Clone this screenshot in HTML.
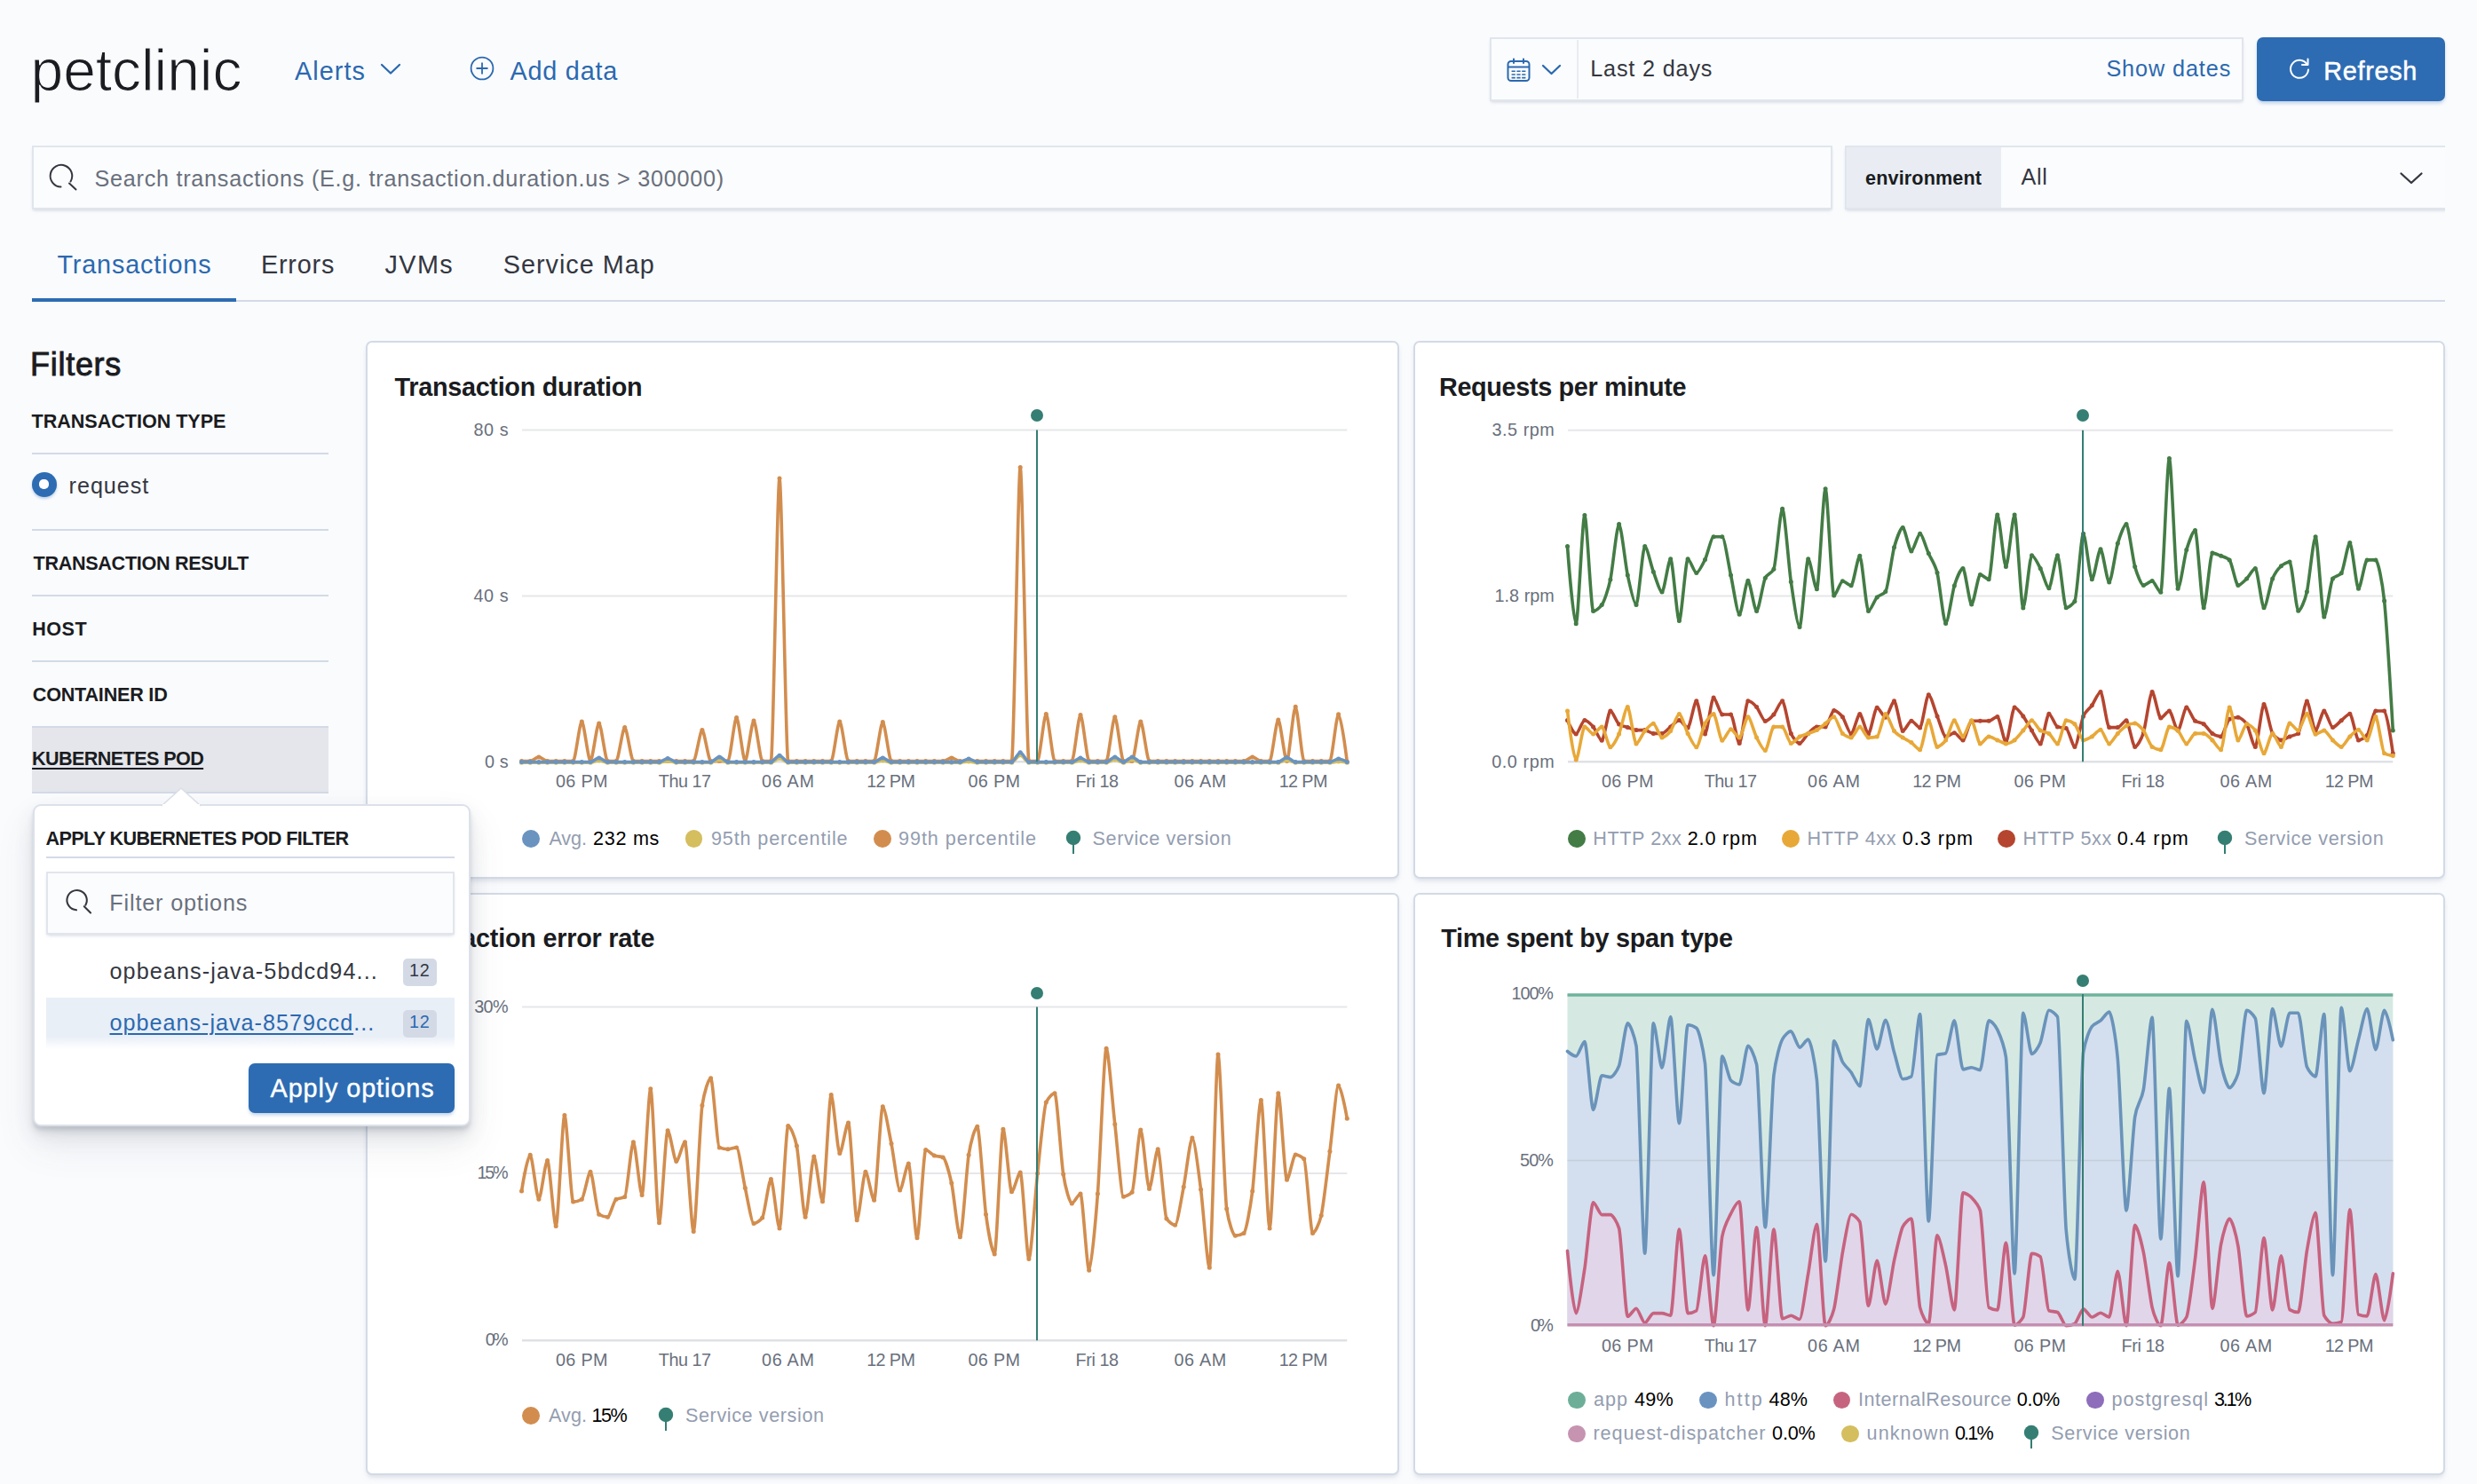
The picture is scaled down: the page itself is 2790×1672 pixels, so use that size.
<!DOCTYPE html>
<html lang="en"><head><meta charset="utf-8"><title>petclinic - APM</title>
<style>
*{box-sizing:border-box;margin:0;padding:0}
html,body{width:2790px;height:1672px;overflow:hidden;background:#fafbfd}
body{position:relative;font-family:"Liberation Sans",sans-serif;color:#1a1c21}
h1,h2,h3,h4{font-weight:400}
.t{position:absolute;white-space:nowrap;line-height:1}
.abs{position:absolute}
.blue{color:#2b69b0}
.b{font-weight:700 !important}
.card{position:absolute;background:#fff;border:2px solid #d3dae6;border-radius:7px;box-shadow:0 3px 4px -1px rgba(152,162,179,.22),0 5px 8px -2px rgba(152,162,179,.12)}
.hr{position:absolute;height:2px;background:#d3dae6}
.charts{position:absolute;left:0;top:0}
.charts text.ax{font-family:"Liberation Sans",sans-serif;font-size:19.8px;fill:#69707d}
.lg{color:#939db0}
.lv{color:#000}
.dot{position:absolute;width:19.8px;height:19.8px;border-radius:50%}
.field{position:absolute;background:#fbfcfd;border:2px solid #e1e5ed;box-shadow:0 2px 3px -1px rgba(152,162,179,.3),0 3px 5px -2px rgba(152,162,179,.15)}
.badge{position:absolute;background:#d3dae6;border-radius:5px;color:#343741;text-align:center}
.ul{text-decoration:underline;text-decoration-thickness:1.8px;text-underline-offset:3px}

</style></head>
<body>
<h1 class="t " style="left:34.5px;top:46.1px;font-size:66.0px;letter-spacing:-0.06px;-webkit-text-stroke:1.1px #fafbfd;">petclinic</h1>
<div class="t blue" style="left:332.0px;top:65.6px;font-size:28.8px;letter-spacing:1.08px;">Alerts</div>
<svg class="abs" style="left:426px;top:66px" width="28" height="22" viewBox="0 0 28 22"><path d="M4 7 L14 16.5 L24 7" fill="none" stroke="#2b69b0" stroke-width="2.3" stroke-linecap="round" stroke-linejoin="round"/></svg>
<svg class="abs" style="left:528px;top:62px" width="30" height="30" viewBox="0 0 30 30"><circle cx="15" cy="15" r="12.4" fill="none" stroke="#2b69b0" stroke-width="1.8"/><path d="M15 8.5V21.5M8.5 15H21.5" stroke="#2b69b0" stroke-width="1.8" fill="none"/></svg>
<div class="t blue" style="left:574.4px;top:65.6px;font-size:28.8px;letter-spacing:0.80px;">Add data</div>
<div class="field" style="left:1678px;top:42px;width:849px;height:72px"></div>
<div class="abs" style="left:1776px;top:45px;width:2px;height:66px;background:#e9ecf2"></div>
<svg class="abs" style="left:1696px;top:64px" width="30" height="30" viewBox="0 0 30 30" fill="none" stroke="#2b69b0" stroke-width="2"><rect x="2.5" y="5" width="24" height="22" rx="3.5"/><path d="M2.5 11.5H26.5"/><path d="M9 2.5V7M20 2.5V7" stroke-linecap="round"/><path d="M6.6 16.3h4.2M12.4 16.3h4.2M18.2 16.3h4.2M6.6 20h4.2M12.4 20h4.2M18.2 20h4.2M6.6 23.6h4.2M12.4 23.6h4.2M18.2 23.6h4.2" stroke-width="1.6"/></svg>
<svg class="abs" style="left:1734px;top:68px" width="28" height="22" viewBox="0 0 28 22"><path d="M4 6 L13.5 15 L23 6" fill="none" stroke="#2b69b0" stroke-width="2.3" stroke-linecap="round" stroke-linejoin="round"/></svg>
<div class="t " style="left:1791.2px;top:64.7px;font-size:25.2px;letter-spacing:0.84px;color:#343741">Last 2 days</div>
<div class="t blue" style="left:2372.4px;top:64.7px;font-size:25.2px;letter-spacing:0.92px;">Show dates</div>
<div class="abs" style="left:2542px;top:42px;width:212px;height:72px;background:#2d6cb3;border-radius:7px;box-shadow:0 3px 4px -1px rgba(45,108,179,.35)"></div>
<svg class="abs" style="left:2576px;top:63px" width="28" height="28" viewBox="0 0 28 28" fill="none" stroke="#fff" stroke-width="2" stroke-linecap="round" stroke-linejoin="round"><path d="M22.5 9.5A10 10 0 1 0 24 15.5"/><path d="M23.5 3.5V10H17"/></svg>
<div class="t " style="left:2617.3px;top:65.9px;font-size:28.8px;letter-spacing:0.70px;color:#fff;-webkit-text-stroke:0.5px #fff">Refresh</div>
<div class="field" style="left:36px;top:164px;width:2028px;height:72px"></div>
<svg class="abs" style="left:52px;top:183px" width="38" height="36" viewBox="0 0 38 36" fill="none" stroke="#343741" stroke-width="2" stroke-linecap="round"><path d="M16.5 27.5A12.3 12.3 0 1 1 27.5 21.5"/><path d="M26 23.5L33.5 30.5"/></svg>
<div class="t " style="left:106.5px;top:188.7px;font-size:25.2px;letter-spacing:0.74px;color:#69707d">Search transactions (E.g. transaction.duration.us &gt; 300000)</div>
<div class="field" style="left:2078px;top:164px;width:700px;height:72px;border-right:0"></div>
<div class="abs" style="left:2754px;top:150px;width:36px;height:100px;background:#fafbfd"></div>
<div class="abs" style="left:2080px;top:166px;width:174px;height:68px;background:#e9edf3"></div>
<div class="t b" style="left:2101.1px;top:190.2px;font-size:21.6px;letter-spacing:0.13px;">environment</div>
<div class="t " style="left:2276.4px;top:187.2px;font-size:25.2px;letter-spacing:0.78px;color:#343741">All</div>
<svg class="abs" style="left:2700px;top:190px" width="32" height="22" viewBox="0 0 32 22"><path d="M4.5 5.5 L16 16 L27.5 5.5" fill="none" stroke="#343741" stroke-width="2.3" stroke-linecap="round" stroke-linejoin="round"/></svg>
<div class="hr" style="left:36px;top:338px;width:2718px"></div>
<div class="abs" style="left:36px;top:336px;width:230px;height:4px;background:#2d6cb3"></div>
<div class="t blue" style="left:64.4px;top:283.6px;font-size:28.8px;letter-spacing:0.86px;">Transactions</div>
<div class="t " style="left:293.9px;top:283.6px;font-size:28.8px;letter-spacing:0.80px;color:#343741">Errors</div>
<div class="t " style="left:433.6px;top:283.6px;font-size:28.8px;letter-spacing:1.38px;color:#343741">JVMs</div>
<div class="t " style="left:566.7px;top:283.6px;font-size:28.8px;letter-spacing:1.00px;color:#343741">Service Map</div>
<h2 class="t " style="left:34.1px;top:393.3px;font-size:36.0px;letter-spacing:0.70px;-webkit-text-stroke:0.9px #1a1c21">Filters</h2>
<h3 class="t b" style="left:35.6px;top:464.3px;font-size:21.6px;letter-spacing:-0.05px;">TRANSACTION TYPE</h3>
<div class="hr" style="left:36px;top:510px;width:334px"></div>
<div class="abs" style="left:36px;top:531.8px;width:28px;height:28px;border-radius:50%;background:#2d6cb3;box-shadow:0 2px 3px rgba(45,108,179,.3)"></div>
<div class="abs" style="left:44.4px;top:540.2px;width:11px;height:11px;border-radius:45%;background:#fff"></div>
<div class="t " style="left:77.6px;top:534.7px;font-size:25.2px;letter-spacing:0.95px;color:#343741">request</div>
<div class="hr" style="left:36px;top:596px;width:334px"></div>
<h3 class="t b" style="left:37.5px;top:623.7px;font-size:21.6px;letter-spacing:-0.31px;">TRANSACTION RESULT</h3>
<div class="hr" style="left:36px;top:670px;width:334px"></div>
<h3 class="t b" style="left:36.3px;top:698.3px;font-size:21.6px;letter-spacing:0.46px;">HOST</h3>
<div class="hr" style="left:36px;top:744px;width:334px"></div>
<h3 class="t b" style="left:36.8px;top:771.7px;font-size:21.6px;letter-spacing:-0.22px;">CONTAINER ID</h3>
<div class="abs" style="left:36px;top:818px;width:334px;height:76px;background:#e4e6eb;border-top:2px solid #d3dae6;border-bottom:2px solid #d3dae6"></div>
<h3 class="t b" style="left:36.1px;top:843.7px;font-size:21.6px;letter-spacing:-0.61px;text-decoration:underline;text-decoration-thickness:2px;text-underline-offset:3px">KUBERNETES POD</h3>
<div class="card" style="left:411.6px;top:384px;width:1164px;height:606px"></div>
<div class="card" style="left:1591.6px;top:384px;width:1162px;height:606px"></div>
<div class="card" style="left:411.6px;top:1005.5px;width:1164px;height:656.5px"></div>
<div class="card" style="left:1591.6px;top:1005.5px;width:1162px;height:656.5px"></div>
<h4 class="t b" style="left:444.6px;top:421.6px;font-size:28.8px;letter-spacing:-0.30px;">Transaction duration</h4>
<h4 class="t b" style="left:1621.0px;top:421.6px;font-size:28.8px;letter-spacing:-0.35px;">Requests per minute</h4>
<h4 class="t b" style="left:444.6px;top:1042.9px;font-size:28.8px;letter-spacing:-0.23px;">Transaction error rate</h4>
<h4 class="t b" style="left:1623.2px;top:1042.9px;font-size:28.8px;letter-spacing:-0.31px;">Time spent by span type</h4>
<svg class="charts" width="2790" height="1672" viewBox="0 0 2790 1672"><line x1="588.0" y1="484.5" x2="1517.3" y2="484.5" stroke="#e6e7ea" stroke-width="2"/><line x1="588.0" y1="671.5" x2="1517.3" y2="671.5" stroke="#e6e7ea" stroke-width="2"/><line x1="588.0" y1="858.3" x2="1517.3" y2="858.3" stroke="#dfe1e5" stroke-width="2.6"/><text x="533.4" y="490.7" textLength="39.3" class="ax">80 s</text><text x="533.4" y="677.7" textLength="39.3" class="ax">40 s</text><text x="545.9" y="864.5" textLength="26.8" class="ax">0 s</text><text x="626.0" y="886.8" textLength="58.5" class="ax">06 PM</text><text x="741.8" y="886.8" textLength="59.3" class="ax">Thu 17</text><text x="858.0" y="886.8" textLength="58.9" class="ax">06 AM</text><text x="976.2" y="886.8" textLength="54.7" class="ax">12 PM</text><text x="1090.4" y="886.8" textLength="58.5" class="ax">06 PM</text><text x="1211.6" y="886.8" textLength="48.4" class="ax">Fri 18</text><text x="1322.4" y="886.8" textLength="58.9" class="ax">06 AM</text><text x="1440.7" y="886.8" textLength="54.7" class="ax">12 PM</text><marker id="mk0" markerWidth="6" markerHeight="6" refX="3" refY="3" markerUnits="userSpaceOnUse"><circle cx="3" cy="3" r="2.5" fill="#d28d4e"/></marker><path d="M587.5,857.6C589.9,857.6,594.8,857.6,597.2,857.6C599.6,857.6,604.4,852.9,606.9,852.9C609.3,852.9,614.1,857.6,616.6,857.6C619.0,857.6,623.8,857.6,626.2,857.6C628.7,857.6,633.5,857.6,635.9,857.6C638.3,857.6,643.2,857.6,645.6,857.6C648.0,857.6,652.9,812.9,655.3,812.9C657.7,812.9,662.6,857.6,665.0,857.6C667.4,857.6,672.2,814.9,674.7,814.9C677.1,814.9,681.9,857.6,684.4,857.6C686.8,857.6,691.6,857.6,694.0,857.6C696.5,857.6,701.3,819.5,703.7,819.5C706.1,819.5,711.0,857.6,713.4,857.6C715.8,857.6,720.7,857.6,723.1,857.6C725.5,857.6,730.4,857.6,732.8,857.6C735.2,857.6,740.0,857.6,742.5,857.6C744.9,857.6,749.7,857.6,752.1,857.6C754.6,857.6,759.4,857.6,761.8,857.6C764.3,857.6,769.1,857.6,771.5,857.6C773.9,857.6,778.8,857.6,781.2,857.6C783.6,857.6,788.5,822.6,790.9,822.6C793.3,822.6,798.1,857.6,800.6,857.6C803.0,857.6,807.8,857.6,810.3,857.6C812.7,857.6,817.5,857.6,819.9,857.6C822.4,857.6,827.2,808.4,829.6,808.4C832.0,808.4,836.9,857.6,839.3,857.6C841.7,857.6,846.6,812.0,849.0,812.0C851.4,812.0,856.3,857.6,858.7,857.6C861.1,857.6,865.9,857.6,868.4,857.6C870.8,857.6,875.6,539.0,878.0,539.0C880.5,539.0,885.3,857.6,887.7,857.6C890.2,857.6,895.0,857.6,897.4,857.6C899.8,857.6,904.7,857.6,907.1,857.6C909.5,857.6,914.4,857.6,916.8,857.6C919.2,857.6,924.1,857.6,926.5,857.6C928.9,857.6,933.7,857.6,936.2,857.6C938.6,857.6,943.4,812.9,945.8,812.9C948.3,812.9,953.1,857.6,955.5,857.6C958.0,857.6,962.8,857.6,965.2,857.6C967.6,857.6,972.5,857.6,974.9,857.6C977.3,857.6,982.2,857.6,984.6,857.6C987.0,857.6,991.8,813.5,994.3,813.5C996.7,813.5,1001.5,857.6,1004.0,857.6C1006.4,857.6,1011.2,857.6,1013.6,857.6C1016.1,857.6,1020.9,857.6,1023.3,857.6C1025.7,857.6,1030.6,857.6,1033.0,857.6C1035.4,857.6,1040.3,857.6,1042.7,857.6C1045.1,857.6,1050.0,857.6,1052.4,857.6C1054.8,857.6,1059.6,857.6,1062.1,857.6C1064.5,857.6,1069.3,853.9,1071.8,853.9C1074.2,853.9,1079.0,857.6,1081.4,857.6C1083.9,857.6,1088.7,857.6,1091.1,857.6C1093.5,857.6,1098.4,857.6,1100.8,857.6C1103.2,857.6,1108.1,857.6,1110.5,857.6C1112.9,857.6,1117.8,857.6,1120.2,857.6C1122.6,857.6,1127.4,857.6,1129.9,857.6C1132.3,857.6,1137.1,857.6,1139.5,857.6C1142.0,857.6,1146.8,526.5,1149.2,526.5C1151.7,526.5,1156.5,857.6,1158.9,857.6C1161.3,857.6,1166.2,857.6,1168.6,857.6C1171.0,857.6,1175.9,804.4,1178.3,804.4C1180.7,804.4,1185.5,857.6,1188.0,857.6C1190.4,857.6,1195.2,857.6,1197.7,857.6C1200.1,857.6,1204.9,857.6,1207.3,857.6C1209.8,857.6,1214.6,805.4,1217.0,805.4C1219.4,805.4,1224.3,857.6,1226.7,857.6C1229.1,857.6,1234.0,857.6,1236.4,857.6C1238.8,857.6,1243.7,857.6,1246.1,857.6C1248.5,857.6,1253.3,807.8,1255.8,807.8C1258.2,807.8,1263.0,857.6,1265.5,857.6C1267.9,857.6,1272.7,857.6,1275.1,857.6C1277.6,857.6,1282.4,812.9,1284.8,812.9C1287.2,812.9,1292.1,857.6,1294.5,857.6C1296.9,857.6,1301.8,857.6,1304.2,857.6C1306.6,857.6,1311.5,857.6,1313.9,857.6C1316.3,857.6,1321.1,857.6,1323.6,857.6C1326.0,857.6,1330.8,857.6,1333.2,857.6C1335.7,857.6,1340.5,857.6,1342.9,857.6C1345.4,857.6,1350.2,857.6,1352.6,857.6C1355.0,857.6,1359.9,857.6,1362.3,857.6C1364.7,857.6,1369.6,857.6,1372.0,857.6C1374.4,857.6,1379.2,857.6,1381.7,857.6C1384.1,857.6,1388.9,857.6,1391.4,857.6C1393.8,857.6,1398.6,857.6,1401.0,857.6C1403.5,857.6,1408.3,852.9,1410.7,852.9C1413.1,852.9,1418.0,857.6,1420.4,857.6C1422.8,857.6,1427.7,857.6,1430.1,857.6C1432.5,857.6,1437.4,810.9,1439.8,810.9C1442.2,810.9,1447.0,857.6,1449.5,857.6C1451.9,857.6,1456.7,796.3,1459.2,796.3C1461.6,796.3,1466.4,857.6,1468.8,857.6C1471.3,857.6,1476.1,857.6,1478.5,857.6C1480.9,857.6,1485.8,857.6,1488.2,857.6C1490.6,857.6,1495.5,857.6,1497.9,857.6C1500.3,857.6,1505.2,804.8,1507.6,804.8C1510.0,804.8,1514.8,838.2,1517.3,858.3" fill="none" stroke="#d28d4e" stroke-width="3.6" stroke-linejoin="round" stroke-linecap="round" marker-start="url(#mk0)" marker-mid="url(#mk0)" marker-end="url(#mk0)"/><marker id="mk1" markerWidth="6" markerHeight="6" refX="3" refY="3" markerUnits="userSpaceOnUse"><circle cx="3" cy="3" r="2.5" fill="#d4be5e"/></marker><path d="M587.5,859.2C589.9,859.2,594.8,859.2,597.2,859.2C599.6,859.2,604.4,859.2,606.9,859.2C609.3,859.2,614.1,859.2,616.6,859.2C619.0,859.2,623.8,859.2,626.2,859.2C628.7,859.2,633.5,859.2,635.9,859.2C638.3,859.2,643.2,859.2,645.6,859.2C648.0,859.2,652.9,859.2,655.3,859.2C657.7,859.2,662.6,859.2,665.0,859.2C667.4,859.2,672.2,856.9,674.7,856.9C677.1,856.9,681.9,859.2,684.4,859.2C686.8,859.2,691.6,859.2,694.0,859.2C696.5,859.2,701.3,859.2,703.7,859.2C706.1,859.2,711.0,859.2,713.4,859.2C715.8,859.2,720.7,859.2,723.1,859.2C725.5,859.2,730.4,859.2,732.8,859.2C735.2,859.2,740.0,859.2,742.5,859.2C744.9,859.2,749.7,857.5,752.1,857.5C754.6,857.5,759.4,859.2,761.8,859.2C764.3,859.2,769.1,859.2,771.5,859.2C773.9,859.2,778.8,859.2,781.2,859.2C783.6,859.2,788.5,859.2,790.9,859.2C793.3,859.2,798.1,859.2,800.6,859.2C803.0,859.2,807.8,855.9,810.3,855.9C812.7,855.9,817.5,859.2,819.9,859.2C822.4,859.2,827.2,859.2,829.6,859.2C832.0,859.2,836.9,859.2,839.3,859.2C841.7,859.2,846.6,859.2,849.0,859.2C851.4,859.2,856.3,859.2,858.7,859.2C861.1,859.2,865.9,859.2,868.4,859.2C870.8,859.2,875.6,854.2,878.0,854.2C880.5,854.2,885.3,859.2,887.7,859.2C890.2,859.2,895.0,859.2,897.4,859.2C899.8,859.2,904.7,859.2,907.1,859.2C909.5,859.2,914.4,859.2,916.8,859.2C919.2,859.2,924.1,859.2,926.5,859.2C928.9,859.2,933.7,859.2,936.2,859.2C938.6,859.2,943.4,859.2,945.8,859.2C948.3,859.2,953.1,859.2,955.5,859.2C958.0,859.2,962.8,859.2,965.2,859.2C967.6,859.2,972.5,859.2,974.9,859.2C977.3,859.2,982.2,859.2,984.6,859.2C987.0,859.2,991.8,856.9,994.3,856.9C996.7,856.9,1001.5,859.2,1004.0,859.2C1006.4,859.2,1011.2,859.2,1013.6,859.2C1016.1,859.2,1020.9,859.2,1023.3,859.2C1025.7,859.2,1030.6,859.2,1033.0,859.2C1035.4,859.2,1040.3,859.2,1042.7,859.2C1045.1,859.2,1050.0,859.2,1052.4,859.2C1054.8,859.2,1059.6,859.2,1062.1,859.2C1064.5,859.2,1069.3,859.2,1071.8,859.2C1074.2,859.2,1079.0,859.2,1081.4,859.2C1083.9,859.2,1088.7,858.0,1091.1,858.0C1093.5,858.0,1098.4,859.2,1100.8,859.2C1103.2,859.2,1108.1,859.2,1110.5,859.2C1112.9,859.2,1117.8,859.2,1120.2,859.2C1122.6,859.2,1127.4,859.2,1129.9,859.2C1132.3,859.2,1137.1,859.2,1139.5,859.2C1142.0,859.2,1146.8,850.8,1149.2,850.8C1151.7,850.8,1156.5,859.2,1158.9,859.2C1161.3,859.2,1166.2,859.2,1168.6,859.2C1171.0,859.2,1175.9,859.2,1178.3,859.2C1180.7,859.2,1185.5,859.2,1188.0,859.2C1190.4,859.2,1195.2,859.2,1197.7,859.2C1200.1,859.2,1204.9,859.2,1207.3,859.2C1209.8,859.2,1214.6,857.0,1217.0,857.0C1219.4,857.0,1224.3,859.2,1226.7,859.2C1229.1,859.2,1234.0,859.2,1236.4,859.2C1238.8,859.2,1243.7,859.2,1246.1,859.2C1248.5,859.2,1253.3,856.0,1255.8,856.0C1258.2,856.0,1263.0,859.2,1265.5,859.2C1267.9,859.2,1272.7,856.0,1275.1,856.0C1277.6,856.0,1282.4,859.2,1284.8,859.2C1287.2,859.2,1292.1,859.2,1294.5,859.2C1296.9,859.2,1301.8,859.2,1304.2,859.2C1306.6,859.2,1311.5,859.2,1313.9,859.2C1316.3,859.2,1321.1,859.2,1323.6,859.2C1326.0,859.2,1330.8,859.2,1333.2,859.2C1335.7,859.2,1340.5,859.2,1342.9,859.2C1345.4,859.2,1350.2,859.2,1352.6,859.2C1355.0,859.2,1359.9,859.2,1362.3,859.2C1364.7,859.2,1369.6,859.2,1372.0,859.2C1374.4,859.2,1379.2,859.2,1381.7,859.2C1384.1,859.2,1388.9,859.2,1391.4,859.2C1393.8,859.2,1398.6,859.2,1401.0,859.2C1403.5,859.2,1408.3,859.2,1410.7,859.2C1413.1,859.2,1418.0,859.2,1420.4,859.2C1422.8,859.2,1427.7,859.2,1430.1,859.2C1432.5,859.2,1437.4,859.2,1439.8,859.2C1442.2,859.2,1447.0,856.5,1449.5,856.5C1451.9,856.5,1456.7,859.2,1459.2,859.2C1461.6,859.2,1466.4,859.2,1468.8,859.2C1471.3,859.2,1476.1,859.2,1478.5,859.2C1480.9,859.2,1485.8,859.2,1488.2,859.2C1490.6,859.2,1495.5,859.2,1497.9,859.2C1500.3,859.2,1505.2,858.0,1507.6,858.0C1510.0,858.0,1514.8,858.8,1517.3,859.2" fill="none" stroke="#d4be5e" stroke-width="3.6" stroke-linejoin="round" stroke-linecap="round" marker-start="url(#mk1)" marker-mid="url(#mk1)" marker-end="url(#mk1)"/><marker id="mk2" markerWidth="6" markerHeight="6" refX="3" refY="3" markerUnits="userSpaceOnUse"><circle cx="3" cy="3" r="2.5" fill="#6a93c0"/></marker><path d="M587.5,858.5C589.9,858.5,594.8,858.5,597.2,858.5C599.6,858.5,604.4,858.5,606.9,858.5C609.3,858.5,614.1,858.5,616.6,858.5C619.0,858.5,623.8,858.5,626.2,858.5C628.7,858.5,633.5,858.5,635.9,858.5C638.3,858.5,643.2,858.5,645.6,858.5C648.0,858.5,652.9,858.5,655.3,858.5C657.7,858.5,662.6,858.5,665.0,858.5C667.4,858.5,672.2,853.9,674.7,853.9C677.1,853.9,681.9,858.5,684.4,858.5C686.8,858.5,691.6,858.5,694.0,858.5C696.5,858.5,701.3,858.5,703.7,858.5C706.1,858.5,711.0,858.5,713.4,858.5C715.8,858.5,720.7,858.5,723.1,858.5C725.5,858.5,730.4,858.5,732.8,858.5C735.2,858.5,740.0,858.5,742.5,858.5C744.9,858.5,749.7,854.5,752.1,854.5C754.6,854.5,759.4,858.5,761.8,858.5C764.3,858.5,769.1,858.5,771.5,858.5C773.9,858.5,778.8,858.5,781.2,858.5C783.6,858.5,788.5,858.5,790.9,858.5C793.3,858.5,798.1,858.5,800.6,858.5C803.0,858.5,807.8,852.9,810.3,852.9C812.7,852.9,817.5,858.5,819.9,858.5C822.4,858.5,827.2,858.5,829.6,858.5C832.0,858.5,836.9,858.5,839.3,858.5C841.7,858.5,846.6,858.5,849.0,858.5C851.4,858.5,856.3,858.5,858.7,858.5C861.1,858.5,865.9,858.5,868.4,858.5C870.8,858.5,875.6,851.2,878.0,851.2C880.5,851.2,885.3,858.5,887.7,858.5C890.2,858.5,895.0,858.5,897.4,858.5C899.8,858.5,904.7,858.5,907.1,858.5C909.5,858.5,914.4,858.5,916.8,858.5C919.2,858.5,924.1,858.5,926.5,858.5C928.9,858.5,933.7,858.5,936.2,858.5C938.6,858.5,943.4,858.5,945.8,858.5C948.3,858.5,953.1,858.5,955.5,858.5C958.0,858.5,962.8,858.5,965.2,858.5C967.6,858.5,972.5,858.5,974.9,858.5C977.3,858.5,982.2,858.5,984.6,858.5C987.0,858.5,991.8,853.9,994.3,853.9C996.7,853.9,1001.5,858.5,1004.0,858.5C1006.4,858.5,1011.2,858.5,1013.6,858.5C1016.1,858.5,1020.9,858.5,1023.3,858.5C1025.7,858.5,1030.6,858.5,1033.0,858.5C1035.4,858.5,1040.3,858.5,1042.7,858.5C1045.1,858.5,1050.0,858.5,1052.4,858.5C1054.8,858.5,1059.6,858.5,1062.1,858.5C1064.5,858.5,1069.3,858.5,1071.8,858.5C1074.2,858.5,1079.0,858.5,1081.4,858.5C1083.9,858.5,1088.7,855.0,1091.1,855.0C1093.5,855.0,1098.4,858.5,1100.8,858.5C1103.2,858.5,1108.1,858.5,1110.5,858.5C1112.9,858.5,1117.8,858.5,1120.2,858.5C1122.6,858.5,1127.4,858.5,1129.9,858.5C1132.3,858.5,1137.1,858.5,1139.5,858.5C1142.0,858.5,1146.8,847.8,1149.2,847.8C1151.7,847.8,1156.5,858.5,1158.9,858.5C1161.3,858.5,1166.2,858.5,1168.6,858.5C1171.0,858.5,1175.9,858.5,1178.3,858.5C1180.7,858.5,1185.5,858.5,1188.0,858.5C1190.4,858.5,1195.2,858.5,1197.7,858.5C1200.1,858.5,1204.9,858.5,1207.3,858.5C1209.8,858.5,1214.6,854.0,1217.0,854.0C1219.4,854.0,1224.3,858.5,1226.7,858.5C1229.1,858.5,1234.0,858.5,1236.4,858.5C1238.8,858.5,1243.7,858.5,1246.1,858.5C1248.5,858.5,1253.3,853.0,1255.8,853.0C1258.2,853.0,1263.0,858.5,1265.5,858.5C1267.9,858.5,1272.7,853.0,1275.1,853.0C1277.6,853.0,1282.4,858.5,1284.8,858.5C1287.2,858.5,1292.1,858.5,1294.5,858.5C1296.9,858.5,1301.8,858.5,1304.2,858.5C1306.6,858.5,1311.5,858.5,1313.9,858.5C1316.3,858.5,1321.1,858.5,1323.6,858.5C1326.0,858.5,1330.8,858.5,1333.2,858.5C1335.7,858.5,1340.5,858.5,1342.9,858.5C1345.4,858.5,1350.2,858.5,1352.6,858.5C1355.0,858.5,1359.9,858.5,1362.3,858.5C1364.7,858.5,1369.6,858.5,1372.0,858.5C1374.4,858.5,1379.2,858.5,1381.7,858.5C1384.1,858.5,1388.9,858.5,1391.4,858.5C1393.8,858.5,1398.6,858.5,1401.0,858.5C1403.5,858.5,1408.3,858.5,1410.7,858.5C1413.1,858.5,1418.0,858.5,1420.4,858.5C1422.8,858.5,1427.7,858.5,1430.1,858.5C1432.5,858.5,1437.4,858.5,1439.8,858.5C1442.2,858.5,1447.0,853.5,1449.5,853.5C1451.9,853.5,1456.7,858.5,1459.2,858.5C1461.6,858.5,1466.4,858.5,1468.8,858.5C1471.3,858.5,1476.1,858.5,1478.5,858.5C1480.9,858.5,1485.8,858.5,1488.2,858.5C1490.6,858.5,1495.5,858.5,1497.9,858.5C1500.3,858.5,1505.2,855.0,1507.6,855.0C1510.0,855.0,1514.8,857.2,1517.3,858.5" fill="none" stroke="#6a93c0" stroke-width="3.6" stroke-linejoin="round" stroke-linecap="round" marker-start="url(#mk2)" marker-mid="url(#mk2)" marker-end="url(#mk2)"/><line x1="1168.0" y1="484.5" x2="1168.0" y2="858.3" stroke="#357e73" stroke-width="2"/><circle cx="1168.0" cy="468.0" r="7" fill="#357e73"/><line x1="1766.0" y1="484.7" x2="2695.3" y2="484.7" stroke="#e6e7ea" stroke-width="2"/><line x1="1766.0" y1="671.5" x2="2695.3" y2="671.5" stroke="#e6e7ea" stroke-width="2"/><line x1="1766.0" y1="858.3" x2="2695.3" y2="858.3" stroke="#dfe1e5" stroke-width="2.6"/><text x="1680.5" y="490.9" textLength="70.3" class="ax">3.5 rpm</text><text x="1683.5" y="677.7" textLength="67.3" class="ax">1.8 rpm</text><text x="1680.2" y="864.5" textLength="70.6" class="ax">0.0 rpm</text><text x="1804.0" y="886.8" textLength="58.5" class="ax">06 PM</text><text x="1919.7" y="886.8" textLength="59.3" class="ax">Thu 17</text><text x="2036.0" y="886.8" textLength="58.9" class="ax">06 AM</text><text x="2154.2" y="886.8" textLength="54.7" class="ax">12 PM</text><text x="2268.4" y="886.8" textLength="58.5" class="ax">06 PM</text><text x="2389.6" y="886.8" textLength="48.4" class="ax">Fri 18</text><text x="2500.4" y="886.8" textLength="58.9" class="ax">06 AM</text><text x="2618.7" y="886.8" textLength="54.7" class="ax">12 PM</text><marker id="mk3" markerWidth="6" markerHeight="6" refX="3" refY="3" markerUnits="userSpaceOnUse"><circle cx="3" cy="3" r="2.5" fill="#437c45"/></marker><path d="M1765.5,615.5C1767.9,648.3,1772.8,702.8,1775.2,702.8C1777.6,702.8,1782.4,580.6,1784.9,580.6C1787.3,580.6,1792.1,688.6,1794.6,688.6C1797.0,688.6,1801.8,685.1,1804.2,681.6C1806.7,678.1,1811.5,664.3,1813.9,652.9C1816.3,641.6,1821.2,590.6,1823.6,590.6C1826.0,590.6,1830.9,636.6,1833.3,648.0C1835.7,659.3,1840.6,681.6,1843.0,681.6C1845.4,681.6,1850.2,615.5,1852.7,615.5C1855.1,615.5,1859.9,637.8,1862.3,644.2C1864.8,650.7,1869.6,667.1,1872.0,667.1C1874.5,667.1,1879.3,629.8,1881.7,629.8C1884.1,629.8,1889.0,699.6,1891.4,699.6C1893.8,699.6,1898.7,629.8,1901.1,629.8C1903.5,629.8,1908.4,645.5,1910.8,645.5C1913.2,645.5,1918.0,635.6,1920.5,630.5C1922.9,625.4,1927.7,604.8,1930.1,604.8C1932.6,604.8,1937.4,604.8,1939.8,604.8C1942.3,604.8,1947.1,637.0,1949.5,648.0C1951.9,658.9,1956.8,692.3,1959.2,692.3C1961.6,692.3,1966.5,654.2,1968.9,654.2C1971.3,654.2,1976.1,688.6,1978.6,688.6C1981.0,688.6,1985.8,656.2,1988.3,651.2C1990.7,646.2,1995.5,646.2,1997.9,641.2C2000.4,636.2,2005.2,573.2,2007.6,573.2C2010.0,573.2,2014.9,638.8,2017.3,655.4C2019.7,672.1,2024.6,706.5,2027.0,706.5C2029.4,706.5,2034.3,629.8,2036.7,629.8C2039.1,629.8,2043.9,663.7,2046.4,663.7C2048.8,663.7,2053.6,550.7,2056.1,550.7C2058.5,550.7,2063.3,671.1,2065.7,671.1C2068.2,671.1,2073.0,654.7,2075.4,654.7C2077.8,654.7,2082.7,659.7,2085.1,659.7C2087.5,659.7,2092.4,626.3,2094.8,626.3C2097.2,626.3,2102.1,688.6,2104.5,688.6C2106.9,688.6,2111.7,675.6,2114.2,672.9C2116.6,670.1,2121.4,669.8,2123.8,666.6C2126.3,663.5,2131.1,625.8,2133.5,616.8C2136.0,607.8,2140.8,594.4,2143.2,594.4C2145.6,594.4,2150.5,621.0,2152.9,621.0C2155.3,621.0,2160.2,601.3,2162.6,601.3C2165.0,601.3,2169.8,618.2,2172.3,623.6C2174.7,629.1,2179.5,635.4,2182.0,645.2C2184.4,655.1,2189.2,702.4,2191.6,702.4C2194.1,702.4,2198.9,667.8,2201.3,660.0C2203.7,652.3,2208.6,640.4,2211.0,640.4C2213.4,640.4,2218.3,681.1,2220.7,681.1C2223.1,681.1,2228.0,647.4,2230.4,647.4C2232.8,647.4,2237.6,652.8,2240.1,652.8C2242.5,652.8,2247.3,580.0,2249.8,580.0C2252.2,580.0,2257.0,638.5,2259.4,638.5C2261.9,638.5,2266.7,580.0,2269.1,580.0C2271.5,580.0,2276.4,685.1,2278.8,685.1C2281.2,685.1,2286.1,625.8,2288.5,625.8C2290.9,625.8,2295.8,635.7,2298.2,640.4C2300.6,645.0,2305.4,662.7,2307.9,662.7C2310.3,662.7,2315.1,625.8,2317.5,625.8C2320.0,625.8,2324.8,684.8,2327.2,684.8C2329.7,684.8,2334.5,681.2,2336.9,677.6C2339.3,673.9,2344.2,601.3,2346.6,601.3C2349.0,601.3,2353.9,652.8,2356.3,652.8C2358.7,652.8,2363.5,618.8,2366.0,618.8C2368.4,618.8,2373.2,656.0,2375.7,656.0C2378.1,656.0,2382.9,620.5,2385.3,612.3C2387.8,604.1,2392.6,590.5,2395.0,590.5C2397.4,590.5,2402.3,629.8,2404.7,638.5C2407.1,647.1,2412.0,659.5,2414.4,659.5C2416.8,659.5,2421.7,654.6,2424.1,654.6C2426.5,654.6,2431.3,667.3,2433.8,667.3C2436.2,667.3,2441.0,516.4,2443.4,516.4C2445.9,516.4,2450.7,663.3,2453.1,663.3C2455.6,663.3,2460.4,627.8,2462.8,619.6C2465.2,611.4,2470.1,597.5,2472.5,597.5C2474.9,597.5,2479.8,684.8,2482.2,684.8C2484.6,684.8,2489.5,623.1,2491.9,623.1C2494.3,623.1,2499.1,625.4,2501.6,626.3C2504.0,627.3,2508.8,628.6,2511.2,630.9C2513.7,633.2,2518.5,659.5,2520.9,659.5C2523.4,659.5,2528.2,654.3,2530.6,652.0C2533.0,649.6,2537.9,640.4,2540.3,640.4C2542.7,640.4,2547.6,684.8,2550.0,684.8C2552.4,684.8,2557.2,657.8,2559.7,652.0C2562.1,646.1,2566.9,640.0,2569.4,637.7C2571.8,635.4,2576.6,633.1,2579.0,633.1C2581.5,633.1,2586.3,688.3,2588.7,688.3C2591.1,688.3,2596.0,677.2,2598.4,666.8C2600.8,656.3,2605.7,604.8,2608.1,604.8C2610.5,604.8,2615.4,695.1,2617.8,695.1C2620.2,695.1,2625.0,655.1,2627.5,652.0C2629.9,648.9,2634.7,648.9,2637.2,645.8C2639.6,642.7,2644.4,611.5,2646.8,611.5C2649.3,611.5,2654.1,663.3,2656.5,663.3C2658.9,663.3,2663.8,630.9,2666.2,630.9C2668.6,630.9,2673.5,630.9,2675.9,630.9C2678.3,630.9,2683.2,654.0,2685.6,677.0C2688.0,700.1,2692.8,779.9,2695.3,823.1" fill="none" stroke="#437c45" stroke-width="3.6" stroke-linejoin="round" stroke-linecap="round" marker-start="url(#mk3)" marker-mid="url(#mk3)" marker-end="url(#mk3)"/><marker id="mk4" markerWidth="6" markerHeight="6" refX="3" refY="3" markerUnits="userSpaceOnUse"><circle cx="3" cy="3" r="2.5" fill="#b5452f"/></marker><path d="M1765.5,811.5C1767.9,817.3,1772.8,826.9,1775.2,826.9C1777.6,826.9,1782.4,811.5,1784.9,811.5C1787.3,811.5,1792.1,816.1,1794.6,818.9C1797.0,821.8,1801.8,834.3,1804.2,834.3C1806.7,834.3,1811.5,800.9,1813.9,800.9C1816.3,800.9,1821.2,814.5,1823.6,816.1C1826.0,817.8,1830.9,818.7,1833.3,819.5C1835.7,820.3,1840.6,822.6,1843.0,822.6C1845.4,822.6,1850.2,822.6,1852.7,822.6C1855.1,822.6,1859.9,826.4,1862.3,826.4C1864.8,826.4,1869.6,826.4,1872.0,826.4C1874.5,826.4,1879.3,820.8,1881.7,818.9C1884.1,817.1,1889.0,811.5,1891.4,811.5C1893.8,811.5,1898.7,819.9,1901.1,819.9C1903.5,819.9,1908.4,789.8,1910.8,789.8C1913.2,789.8,1918.0,826.9,1920.5,826.9C1922.9,826.9,1927.7,786.1,1930.1,786.1C1932.6,786.1,1937.4,805.0,1939.8,805.0C1942.3,805.0,1947.1,805.0,1949.5,805.0C1951.9,805.0,1956.8,837.5,1959.2,837.5C1961.6,837.5,1966.5,789.8,1968.9,789.8C1971.3,789.8,1976.1,793.8,1978.6,796.6C1981.0,799.5,1985.8,812.4,1988.3,812.4C1990.7,812.4,1995.5,807.8,1997.9,805.0C2000.4,802.2,2005.2,789.8,2007.6,789.8C2010.0,789.8,2014.9,820.8,2017.3,826.4C2019.7,831.9,2024.6,837.5,2027.0,837.5C2029.4,837.5,2034.3,828.7,2036.7,826.4C2039.1,824.0,2043.9,818.9,2046.4,818.9C2048.8,818.9,2053.6,818.9,2056.1,818.9C2058.5,818.9,2063.3,800.4,2065.7,800.4C2068.2,800.4,2073.0,804.5,2075.4,807.8C2077.8,811.1,2082.7,826.9,2085.1,826.9C2087.5,826.9,2092.4,804.6,2094.8,804.6C2097.2,804.6,2102.1,826.9,2104.5,826.9C2106.9,826.9,2111.7,797.2,2114.2,797.2C2116.6,797.2,2121.4,808.3,2123.8,808.3C2126.3,808.3,2131.1,789.8,2133.5,789.8C2136.0,789.8,2140.8,823.6,2143.2,823.6C2145.6,823.6,2150.5,812.3,2152.9,812.3C2155.3,812.3,2160.2,819.9,2162.6,819.9C2165.0,819.9,2169.8,782.7,2172.3,782.7C2174.7,782.7,2179.5,801.0,2182.0,806.9C2184.4,812.8,2189.2,829.9,2191.6,829.9C2194.1,829.9,2198.9,825.8,2201.3,825.8C2203.7,825.8,2208.6,833.9,2211.0,833.9C2213.4,833.9,2218.3,812.3,2220.7,812.3C2223.1,812.3,2228.0,812.3,2230.4,812.3C2232.8,812.3,2237.6,812.3,2240.1,812.3C2242.5,812.3,2247.3,807.5,2249.8,807.5C2252.2,807.5,2257.0,836.1,2259.4,836.1C2261.9,836.1,2266.7,797.0,2269.1,797.0C2271.5,797.0,2276.4,803.7,2278.8,806.9C2281.2,810.2,2286.1,819.2,2288.5,823.1C2290.9,827.0,2295.8,837.9,2298.2,837.9C2300.6,837.9,2305.4,804.2,2307.9,804.2C2310.3,804.2,2315.1,818.4,2317.5,819.1C2320.0,819.7,2324.8,819.7,2327.2,820.4C2329.7,821.1,2334.5,841.4,2336.9,841.4C2339.3,841.4,2344.2,812.8,2346.6,806.9C2349.0,801.1,2353.9,798.3,2356.3,794.8C2358.7,791.4,2363.5,779.5,2366.0,779.5C2368.4,779.5,2373.2,819.6,2375.7,819.6C2378.1,819.6,2382.9,819.6,2385.3,819.6C2387.8,819.6,2392.6,811.8,2395.0,811.8C2397.4,811.8,2402.3,841.4,2404.7,841.4C2407.1,841.4,2412.0,833.0,2414.4,825.3C2416.8,817.5,2421.7,779.5,2424.1,779.5C2426.5,779.5,2431.3,809.1,2433.8,809.1C2436.2,809.1,2441.0,801.0,2443.4,801.0C2445.9,801.0,2450.7,823.1,2453.1,823.1C2455.6,823.1,2460.4,797.0,2462.8,797.0C2465.2,797.0,2470.1,810.6,2472.5,812.3C2474.9,814.1,2479.8,814.1,2482.2,815.8C2484.6,817.6,2489.5,824.6,2491.9,826.4C2494.3,828.1,2499.1,829.9,2501.6,829.9C2504.0,829.9,2508.8,811.1,2511.2,810.2C2513.7,809.2,2518.5,808.3,2520.9,808.3C2523.4,808.3,2528.2,812.1,2530.6,815.8C2533.0,819.6,2537.9,841.4,2540.3,841.4C2542.7,841.4,2547.6,793.5,2550.0,793.5C2552.4,793.5,2557.2,822.6,2559.7,826.4C2562.1,830.1,2566.9,833.9,2569.4,833.9C2571.8,833.9,2576.6,830.8,2579.0,829.9C2581.5,828.9,2586.3,828.1,2588.7,826.4C2591.1,824.6,2596.0,790.0,2598.4,790.0C2600.8,790.0,2605.7,823.1,2608.1,823.1C2610.5,823.1,2615.4,801.0,2617.8,801.0C2620.2,801.0,2625.0,819.6,2627.5,819.6C2629.9,819.6,2634.7,813.7,2637.2,811.8C2639.6,809.9,2644.4,804.2,2646.8,804.2C2649.3,804.2,2654.1,833.9,2656.5,833.9C2658.9,833.9,2663.8,831.2,2666.2,828.5C2668.6,825.8,2673.5,801.0,2675.9,801.0C2678.3,801.0,2683.2,801.0,2685.6,801.0C2688.0,801.0,2692.8,830.8,2695.3,848.7" fill="none" stroke="#b5452f" stroke-width="3.6" stroke-linejoin="round" stroke-linecap="round" marker-start="url(#mk4)" marker-mid="url(#mk4)" marker-end="url(#mk4)"/><marker id="mk5" markerWidth="6" markerHeight="6" refX="3" refY="3" markerUnits="userSpaceOnUse"><circle cx="3" cy="3" r="2.5" fill="#e8a838"/></marker><path d="M1765.5,800.9C1767.9,821.6,1772.8,856.1,1775.2,856.1C1777.6,856.1,1782.4,818.9,1784.9,818.9C1787.3,818.9,1792.1,826.9,1794.6,826.9C1797.0,826.9,1801.8,818.9,1804.2,818.9C1806.7,818.9,1811.5,841.8,1813.9,841.8C1816.3,841.8,1821.2,832.5,1823.6,826.9C1826.0,821.3,1830.9,796.6,1833.3,796.6C1835.7,796.6,1840.6,838.1,1843.0,838.1C1845.4,838.1,1850.2,826.4,1852.7,823.6C1855.1,820.7,1859.9,815.2,1862.3,815.2C1864.8,815.2,1869.6,831.0,1872.0,831.0C1874.5,831.0,1879.3,826.9,1881.7,823.6C1884.1,820.3,1889.0,804.6,1891.4,804.6C1893.8,804.6,1898.7,821.7,1901.1,826.4C1903.5,831.0,1908.4,841.8,1910.8,841.8C1913.2,841.8,1918.0,819.9,1920.5,815.2C1922.9,810.6,1927.7,804.6,1930.1,804.6C1932.6,804.6,1937.4,834.3,1939.8,834.3C1942.3,834.3,1947.1,821.7,1949.5,821.7C1951.9,821.7,1956.8,831.0,1959.2,831.0C1961.6,831.0,1966.5,807.8,1968.9,807.8C1971.3,807.8,1976.1,826.3,1978.6,831.0C1981.0,835.7,1985.8,845.5,1988.3,845.5C1990.7,845.5,1995.5,818.9,1997.9,818.9C2000.4,818.9,2005.2,818.9,2007.6,818.9C2010.0,818.9,2014.9,837.5,2017.3,837.5C2019.7,837.5,2024.6,831.5,2027.0,830.1C2029.4,828.7,2034.3,827.3,2036.7,826.4C2039.1,825.4,2043.9,824.0,2046.4,822.6C2048.8,821.2,2053.6,817.1,2056.1,815.2C2058.5,813.4,2063.3,807.8,2065.7,807.8C2068.2,807.8,2073.0,824.0,2075.4,826.4C2077.8,828.7,2082.7,831.0,2085.1,831.0C2087.5,831.0,2092.4,818.9,2094.8,818.9C2097.2,818.9,2102.1,831.0,2104.5,831.0C2106.9,831.0,2111.7,830.5,2114.2,830.1C2116.6,829.6,2121.4,804.6,2123.8,804.6C2126.3,804.6,2131.1,820.3,2133.5,823.6C2136.0,826.9,2140.8,829.4,2143.2,831.0C2145.6,832.6,2150.5,834.9,2152.9,836.6C2155.3,838.3,2160.2,844.7,2162.6,844.7C2165.0,844.7,2169.8,811.8,2172.3,811.8C2174.7,811.8,2179.5,841.4,2182.0,841.4C2184.4,841.4,2189.2,837.6,2191.6,833.9C2194.1,830.2,2198.9,811.8,2201.3,811.8C2203.7,811.8,2208.6,829.9,2211.0,829.9C2213.4,829.9,2218.3,811.8,2220.7,811.8C2223.1,811.8,2228.0,837.9,2230.4,837.9C2232.8,837.9,2237.6,829.9,2240.1,829.9C2242.5,829.9,2247.3,832.9,2249.8,833.9C2252.2,834.9,2257.0,837.9,2259.4,837.9C2261.9,837.9,2266.7,835.8,2269.1,833.9C2271.5,832.0,2276.4,825.9,2278.8,823.1C2281.2,820.4,2286.1,811.8,2288.5,811.8C2290.9,811.8,2295.8,821.5,2298.2,823.1C2300.6,824.7,2305.4,824.7,2307.9,826.4C2310.3,828.0,2315.1,837.9,2317.5,837.9C2320.0,837.9,2324.8,811.8,2327.2,811.8C2329.7,811.8,2334.5,813.8,2336.9,815.8C2339.3,817.9,2344.2,833.9,2346.6,833.9C2349.0,833.9,2353.9,831.3,2356.3,829.9C2358.7,828.4,2363.5,822.3,2366.0,822.3C2368.4,822.3,2373.2,837.9,2375.7,837.9C2378.1,837.9,2382.9,828.9,2385.3,826.4C2387.8,823.8,2392.6,819.1,2395.0,817.7C2397.4,816.4,2402.3,815.0,2404.7,815.0C2407.1,815.0,2412.0,819.8,2414.4,823.1C2416.8,826.4,2421.7,839.8,2424.1,841.4C2426.5,843.1,2431.3,844.7,2433.8,844.7C2436.2,844.7,2441.0,819.1,2443.4,819.1C2445.9,819.1,2450.7,821.1,2453.1,823.1C2455.6,825.1,2460.4,837.9,2462.8,837.9C2465.2,837.9,2470.1,826.4,2472.5,826.4C2474.9,826.4,2479.8,826.4,2482.2,826.4C2484.6,826.4,2489.5,831.6,2491.9,833.9C2494.3,836.2,2499.1,844.7,2501.6,844.7C2504.0,844.7,2508.8,797.0,2511.2,797.0C2513.7,797.0,2518.5,833.9,2520.9,833.9C2523.4,833.9,2528.2,815.8,2530.6,815.8C2533.0,815.8,2537.9,819.5,2540.3,823.1C2542.7,826.8,2547.6,848.7,2550.0,848.7C2552.4,848.7,2557.2,826.4,2559.7,826.4C2562.1,826.4,2566.9,841.4,2569.4,841.4C2571.8,841.4,2576.6,815.0,2579.0,815.0C2581.5,815.0,2586.3,823.1,2588.7,823.1C2591.1,823.1,2596.0,804.2,2598.4,804.2C2600.8,804.2,2605.7,827.2,2608.1,827.2C2610.5,827.2,2615.4,823.1,2617.8,823.1C2620.2,823.1,2625.0,831.6,2627.5,833.9C2629.9,836.2,2634.7,841.4,2637.2,841.4C2639.6,841.4,2644.4,832.2,2646.8,829.9C2649.3,827.5,2654.1,822.3,2656.5,822.3C2658.9,822.3,2663.8,833.9,2666.2,833.9C2668.6,833.9,2673.5,807.5,2675.9,807.5C2678.3,807.5,2683.2,847.4,2685.6,848.7C2688.0,850.1,2692.8,851.1,2695.3,851.4" fill="none" stroke="#e8a838" stroke-width="3.6" stroke-linejoin="round" stroke-linecap="round" marker-start="url(#mk5)" marker-mid="url(#mk5)" marker-end="url(#mk5)"/><line x1="2346.0" y1="484.7" x2="2346.0" y2="858.3" stroke="#357e73" stroke-width="2"/><circle cx="2346.0" cy="468.0" r="7" fill="#357e73"/><line x1="588.0" y1="1134.6" x2="1517.3" y2="1134.6" stroke="#e6e7ea" stroke-width="2"/><line x1="588.0" y1="1322.0" x2="1517.3" y2="1322.0" stroke="#e6e7ea" stroke-width="2"/><line x1="588.0" y1="1510.2" x2="1517.3" y2="1510.2" stroke="#dfe1e5" stroke-width="2.6"/><text x="534.2" y="1140.8" textLength="38.3" class="ax">30%</text><text x="537.5" y="1328.2" textLength="35.0" class="ax">15%</text><text x="546.7" y="1516.4" textLength="25.8" class="ax">0%</text><text x="626.0" y="1539.0" textLength="58.5" class="ax">06 PM</text><text x="741.8" y="1539.0" textLength="59.3" class="ax">Thu 17</text><text x="858.0" y="1539.0" textLength="58.9" class="ax">06 AM</text><text x="976.2" y="1539.0" textLength="54.7" class="ax">12 PM</text><text x="1090.4" y="1539.0" textLength="58.5" class="ax">06 PM</text><text x="1211.6" y="1539.0" textLength="48.4" class="ax">Fri 18</text><text x="1322.4" y="1539.0" textLength="58.9" class="ax">06 AM</text><text x="1440.7" y="1539.0" textLength="54.7" class="ax">12 PM</text><path d="M587.5,1342.1C589.9,1326.8,594.8,1301.3,597.2,1301.3C599.6,1301.3,604.4,1351.2,606.9,1351.2C609.3,1351.2,614.1,1307.5,616.6,1307.5C619.0,1307.5,623.8,1381.4,626.2,1381.4C628.7,1381.4,633.5,1256.6,635.9,1256.6C638.3,1256.6,643.2,1354.1,645.6,1354.1C648.0,1354.1,652.9,1352.6,655.3,1351.2C657.7,1349.7,662.6,1320.2,665.0,1320.2C667.4,1320.2,672.2,1366.8,674.7,1368.3C677.1,1369.7,681.9,1371.2,684.4,1371.2C686.8,1371.2,691.6,1352.4,694.0,1351.2C696.5,1349.9,701.3,1349.9,703.7,1348.6C706.1,1347.3,711.0,1286.8,713.4,1286.8C715.8,1286.8,720.7,1346.4,723.1,1346.4C725.5,1346.4,730.4,1226.7,732.8,1226.7C735.2,1226.7,740.0,1377.7,742.5,1377.7C744.9,1377.7,749.7,1273.7,752.1,1273.7C754.6,1273.7,759.4,1308.6,761.8,1308.6C764.3,1308.6,769.1,1286.8,771.5,1286.8C773.9,1286.8,778.8,1387.6,781.2,1387.6C783.6,1387.6,788.5,1261.1,790.9,1245.6C793.3,1230.2,798.1,1214.7,800.6,1214.7C803.0,1214.7,807.8,1292.0,810.3,1292.9C812.7,1293.9,817.5,1294.8,819.9,1294.8C822.4,1294.8,827.2,1292.9,829.6,1292.9C832.0,1292.9,836.9,1327.7,839.3,1338.4C841.7,1349.1,846.6,1378.5,849.0,1378.5C851.4,1378.5,856.3,1375.2,858.7,1371.9C861.1,1368.6,865.9,1328.6,868.4,1328.6C870.8,1328.6,875.6,1383.9,878.0,1383.9C880.5,1383.9,885.3,1268.6,887.7,1268.6C890.2,1268.6,895.0,1279.8,897.4,1291.1C899.8,1302.4,904.7,1371.2,907.1,1371.2C909.5,1371.2,914.4,1303.1,916.8,1303.1C919.2,1303.1,924.1,1353.7,926.5,1353.7C928.9,1353.7,933.7,1233.6,936.2,1233.6C938.6,1233.6,943.4,1299.5,945.8,1299.5C948.3,1299.5,953.1,1264.9,955.5,1264.9C958.0,1264.9,962.8,1374.8,965.2,1374.8C967.6,1374.8,972.5,1320.2,974.9,1320.2C977.3,1320.2,982.2,1352.3,984.6,1352.3C987.0,1352.3,991.8,1246.7,994.3,1246.7C996.7,1246.7,1001.5,1276.8,1004.0,1288.6C1006.4,1300.4,1011.2,1341.0,1013.6,1341.0C1016.1,1341.0,1020.9,1311.1,1023.3,1311.1C1025.7,1311.1,1030.6,1394.8,1033.0,1394.8C1035.4,1394.8,1040.3,1295.5,1042.7,1295.5C1045.1,1295.5,1050.0,1301.1,1052.4,1302.0C1054.8,1302.9,1059.6,1302.9,1062.1,1303.9C1064.5,1304.8,1069.3,1321.7,1071.8,1333.0C1074.2,1344.2,1079.0,1393.7,1081.4,1393.7C1083.9,1393.7,1088.7,1316.9,1091.1,1301.3C1093.5,1285.8,1098.4,1269.3,1100.8,1269.3C1103.2,1269.3,1108.1,1350.3,1110.5,1368.3C1112.9,1386.2,1117.8,1413.0,1120.2,1413.0C1122.6,1413.0,1127.4,1272.2,1129.9,1272.2C1132.3,1272.2,1137.1,1342.8,1139.5,1342.8C1142.0,1342.8,1146.8,1321.0,1149.2,1321.0C1151.7,1321.0,1156.5,1418.5,1158.9,1418.5C1161.3,1418.5,1166.2,1344.1,1168.6,1322.1C1171.0,1300.0,1175.9,1247.1,1178.3,1242.0C1180.7,1236.9,1185.5,1231.8,1188.0,1231.8C1190.4,1231.8,1195.2,1307.6,1197.7,1323.1C1200.1,1338.7,1204.9,1355.9,1207.3,1355.9C1209.8,1355.9,1214.6,1345.0,1217.0,1345.0C1219.4,1345.0,1224.3,1431.2,1226.7,1431.2C1229.1,1431.2,1234.0,1376.2,1236.4,1345.0C1238.8,1313.7,1243.7,1181.2,1246.1,1181.2C1248.5,1181.2,1253.3,1245.9,1255.8,1266.7C1258.2,1287.6,1263.0,1348.3,1265.5,1348.3C1267.9,1348.3,1272.7,1345.7,1275.1,1343.2C1277.6,1340.6,1282.4,1272.9,1284.8,1272.9C1287.2,1272.9,1292.1,1339.5,1294.5,1339.5C1296.9,1339.5,1301.8,1294.8,1304.2,1294.8C1306.6,1294.8,1311.5,1369.4,1313.9,1373.0C1316.3,1376.6,1321.1,1380.3,1323.6,1380.3C1326.0,1380.3,1330.8,1349.6,1333.2,1337.3C1335.7,1325.1,1340.5,1282.0,1342.9,1282.0C1345.4,1282.0,1350.2,1322.0,1352.6,1340.2C1355.0,1358.5,1359.9,1428.3,1362.3,1428.3C1364.7,1428.3,1369.6,1188.1,1372.0,1188.1C1374.4,1188.1,1379.2,1347.0,1381.7,1362.1C1384.1,1377.2,1388.9,1392.3,1391.4,1392.3C1393.8,1392.3,1398.6,1390.8,1401.0,1389.4C1403.5,1387.9,1408.3,1360.8,1410.7,1342.1C1413.1,1323.3,1418.0,1239.4,1420.4,1239.4C1422.8,1239.4,1427.7,1383.9,1430.1,1383.9C1432.5,1383.9,1437.4,1231.8,1439.8,1231.8C1442.2,1231.8,1447.0,1329.3,1449.5,1329.3C1451.9,1329.3,1456.7,1300.9,1459.2,1300.9C1461.6,1300.9,1466.4,1303.3,1468.8,1305.7C1471.3,1308.0,1476.1,1389.4,1478.5,1389.4C1480.9,1389.4,1485.8,1379.4,1488.2,1369.4C1490.6,1359.4,1495.5,1315.6,1497.9,1297.3C1500.3,1279.0,1505.2,1223.1,1507.6,1223.1C1510.0,1223.1,1514.8,1246.3,1517.3,1260.2" fill="none" stroke="#d28d4e" stroke-width="3.6" stroke-linejoin="round" stroke-linecap="round" marker-start="url(#mk0)" marker-mid="url(#mk0)" marker-end="url(#mk0)"/><line x1="1168.0" y1="1134.6" x2="1168.0" y2="1510.2" stroke="#357e73" stroke-width="2"/><circle cx="1168.0" cy="1119.0" r="7" fill="#357e73"/><text x="1702.6" y="1126.2" textLength="47.3" class="ax">100%</text><text x="1712.1" y="1313.7" textLength="37.8" class="ax">50%</text><text x="1724.1" y="1500.0" textLength="25.8" class="ax">0%</text><text x="1804.0" y="1522.6" textLength="58.5" class="ax">06 PM</text><text x="1919.7" y="1522.6" textLength="59.3" class="ax">Thu 17</text><text x="2036.0" y="1522.6" textLength="58.9" class="ax">06 AM</text><text x="2154.2" y="1522.6" textLength="54.7" class="ax">12 PM</text><text x="2268.4" y="1522.6" textLength="58.5" class="ax">06 PM</text><text x="2389.6" y="1522.6" textLength="48.4" class="ax">Fri 18</text><text x="2500.4" y="1522.6" textLength="58.9" class="ax">06 AM</text><text x="2618.7" y="1522.6" textLength="54.7" class="ax">12 PM</text><rect x="1765.5" y="1120.0" width="929.8" height="373.8" fill="#d5e9e2"/><path d="M1765.5,1184.5C1767.9,1186.5,1772.8,1190.0,1775.2,1190.0C1777.6,1190.0,1782.4,1173.6,1784.9,1173.6C1787.3,1173.6,1792.1,1250.4,1794.6,1250.4C1797.0,1250.4,1801.8,1211.8,1804.2,1211.8C1806.7,1211.8,1811.5,1213.6,1813.9,1213.6C1816.3,1213.6,1821.2,1207.2,1823.6,1200.9C1826.0,1194.5,1830.9,1152.8,1833.3,1152.8C1835.7,1152.8,1840.6,1165.6,1843.0,1178.3C1845.4,1191.0,1850.2,1412.3,1852.7,1412.3C1855.1,1412.3,1859.9,1152.8,1862.3,1152.8C1864.8,1152.8,1869.6,1203.1,1872.0,1203.1C1874.5,1203.1,1879.3,1145.6,1881.7,1145.6C1884.1,1145.6,1889.0,1265.6,1891.4,1265.6C1893.8,1265.6,1898.7,1154.7,1901.1,1154.7C1903.5,1154.7,1908.4,1156.5,1910.8,1158.3C1913.2,1160.1,1918.0,1178.3,1920.5,1198.3C1922.9,1218.3,1927.7,1436.7,1930.1,1436.7C1932.6,1436.7,1937.4,1190.0,1939.8,1190.0C1942.3,1190.0,1947.1,1214.9,1949.5,1217.2C1951.9,1219.6,1956.8,1222.0,1959.2,1222.0C1961.6,1222.0,1966.5,1178.3,1968.9,1178.3C1971.3,1178.3,1976.1,1188.9,1978.6,1199.4C1981.0,1210.0,1985.8,1382.8,1988.3,1382.8C1990.7,1382.8,1995.5,1232.2,1997.9,1211.8C2000.4,1191.4,2005.2,1175.6,2007.6,1171.0C2010.0,1166.5,2014.9,1161.9,2017.3,1161.9C2019.7,1161.9,2024.6,1180.1,2027.0,1180.1C2029.4,1180.1,2034.3,1171.0,2036.7,1171.0C2039.1,1171.0,2043.9,1193.8,2046.4,1216.5C2048.8,1239.3,2053.6,1421.0,2056.1,1421.0C2058.5,1421.0,2063.3,1172.9,2065.7,1172.9C2068.2,1172.9,2073.0,1192.1,2075.4,1196.5C2077.8,1200.9,2082.7,1204.7,2085.1,1208.2C2087.5,1211.6,2092.4,1223.8,2094.8,1223.8C2097.2,1223.8,2102.1,1148.5,2104.5,1148.5C2106.9,1148.5,2111.7,1182.0,2114.2,1182.0C2116.6,1182.0,2121.4,1149.2,2123.8,1149.2C2126.3,1149.2,2131.1,1177.3,2133.5,1185.6C2136.0,1193.9,2140.8,1215.8,2143.2,1215.8C2145.6,1215.8,2150.5,1214.3,2152.9,1212.9C2155.3,1211.4,2160.2,1142.6,2162.6,1142.6C2165.0,1142.6,2169.8,1375.9,2172.3,1375.9C2174.7,1375.9,2179.5,1189.4,2182.0,1188.5C2184.4,1187.6,2189.2,1187.6,2191.6,1186.7C2194.1,1185.8,2198.9,1149.9,2201.3,1149.9C2203.7,1149.9,2208.6,1204.9,2211.0,1204.9C2213.4,1204.9,2218.3,1202.7,2220.7,1202.7C2223.1,1202.7,2228.0,1205.6,2230.4,1205.6C2232.8,1205.6,2237.6,1149.9,2240.1,1149.9C2242.5,1149.9,2247.3,1155.0,2249.8,1160.1C2252.2,1165.2,2257.0,1175.6,2259.4,1191.0C2261.9,1206.5,2266.7,1434.9,2269.1,1434.9C2271.5,1434.9,2276.4,1141.2,2278.8,1141.2C2281.2,1141.2,2286.1,1187.4,2288.5,1187.4C2290.9,1187.4,2295.8,1180.8,2298.2,1174.7C2300.6,1168.5,2305.4,1138.3,2307.9,1138.3C2310.3,1138.3,2315.1,1141.9,2317.5,1145.6C2320.0,1149.2,2324.8,1357.9,2327.2,1385.7C2329.7,1413.6,2334.5,1441.4,2336.9,1441.4C2339.3,1441.4,2344.2,1200.1,2346.6,1185.6C2349.0,1171.0,2353.9,1159.8,2356.3,1156.5C2358.7,1153.2,2363.5,1152.0,2366.0,1149.9C2368.4,1147.9,2373.2,1140.1,2375.7,1140.1C2378.1,1140.1,2382.9,1166.5,2385.3,1192.9C2387.8,1219.3,2392.6,1363.9,2395.0,1363.9C2397.4,1363.9,2402.3,1273.8,2404.7,1258.4C2407.1,1242.9,2412.0,1241.4,2414.4,1227.4C2416.8,1213.4,2421.7,1146.3,2424.1,1146.3C2426.5,1146.3,2431.3,1395.9,2433.8,1395.9C2436.2,1395.9,2441.0,1226.3,2443.4,1226.3C2445.9,1226.3,2450.7,1437.8,2453.1,1437.8C2455.6,1437.8,2460.4,1150.3,2462.8,1150.3C2465.2,1150.3,2470.1,1184.6,2472.5,1194.7C2474.9,1204.8,2479.8,1231.1,2482.2,1231.1C2484.6,1231.1,2489.5,1137.2,2491.9,1137.2C2494.3,1137.2,2499.1,1187.3,2501.6,1198.3C2504.0,1209.4,2508.8,1225.6,2511.2,1225.6C2513.7,1225.6,2518.5,1217.4,2520.9,1209.2C2523.4,1201.1,2528.2,1138.3,2530.6,1138.3C2533.0,1138.3,2537.9,1142.8,2540.3,1147.4C2542.7,1151.9,2547.6,1231.8,2550.0,1231.8C2552.4,1231.8,2557.2,1136.5,2559.7,1136.5C2562.1,1136.5,2566.9,1179.0,2569.4,1179.0C2571.8,1179.0,2576.6,1141.2,2579.0,1141.2C2581.5,1141.2,2586.3,1141.2,2588.7,1141.2C2591.1,1141.2,2596.0,1196.5,2598.4,1202.0C2600.8,1207.4,2605.7,1212.9,2608.1,1212.9C2610.5,1212.9,2615.4,1142.6,2617.8,1142.6C2620.2,1142.6,2625.0,1436.7,2627.5,1436.7C2629.9,1436.7,2634.7,1135.4,2637.2,1135.4C2639.6,1135.4,2644.4,1206.7,2646.8,1206.7C2649.3,1206.7,2654.1,1179.8,2656.5,1171.0C2658.9,1162.3,2663.8,1136.5,2666.2,1136.5C2668.6,1136.5,2673.5,1182.7,2675.9,1182.7C2678.3,1182.7,2683.2,1138.3,2685.6,1138.3C2688.0,1138.3,2692.8,1159.2,2695.3,1171.8L2695.3,1493.8L1765.5,1493.8Z" fill="#d3dfee"/><path d="M1765.5,1409.4C1767.9,1435.7,1772.8,1479.6,1775.2,1479.6C1777.6,1479.6,1782.4,1445.0,1784.9,1429.4C1787.3,1413.8,1792.1,1354.8,1794.6,1354.8C1797.0,1354.8,1801.8,1368.6,1804.2,1368.6C1806.7,1368.6,1811.5,1368.6,1813.9,1368.6C1816.3,1368.6,1821.2,1376.3,1823.6,1383.9C1826.0,1391.6,1830.9,1483.3,1833.3,1483.3C1835.7,1483.3,1840.6,1474.2,1843.0,1474.2C1845.4,1474.2,1850.2,1490.5,1852.7,1490.5C1855.1,1490.5,1859.9,1479.6,1862.3,1479.6C1864.8,1479.6,1869.6,1479.6,1872.0,1479.6C1874.5,1479.6,1879.3,1482.2,1881.7,1482.2C1884.1,1482.2,1889.0,1385.0,1891.4,1385.0C1893.8,1385.0,1898.7,1479.6,1901.1,1479.6C1903.5,1479.6,1908.4,1478.2,1910.8,1476.7C1913.2,1475.3,1918.0,1414.8,1920.5,1414.8C1922.9,1414.8,1927.7,1493.8,1930.1,1493.8C1932.6,1493.8,1937.4,1405.7,1939.8,1393.0C1942.3,1380.3,1947.1,1372.5,1949.5,1367.5C1951.9,1362.6,1956.8,1353.7,1959.2,1353.7C1961.6,1353.7,1966.5,1476.0,1968.9,1476.0C1971.3,1476.0,1976.1,1382.8,1978.6,1382.8C1981.0,1382.8,1985.8,1493.8,1988.3,1493.8C1990.7,1493.8,1995.5,1385.0,1997.9,1385.0C2000.4,1385.0,2005.2,1485.8,2007.6,1485.8C2010.0,1485.8,2014.9,1482.2,2017.3,1482.2C2019.7,1482.2,2024.6,1486.5,2027.0,1486.5C2029.4,1486.5,2034.3,1448.3,2036.7,1434.9C2039.1,1421.4,2043.9,1379.2,2046.4,1379.2C2048.8,1379.2,2053.6,1493.8,2056.1,1493.8C2058.5,1493.8,2063.3,1484.4,2065.7,1474.9C2068.2,1465.4,2073.0,1424.5,2075.4,1411.2C2077.8,1397.9,2082.7,1368.3,2085.1,1368.3C2087.5,1368.3,2092.4,1372.5,2094.8,1376.6C2097.2,1380.8,2102.1,1471.3,2104.5,1471.3C2106.9,1471.3,2111.7,1420.3,2114.2,1420.3C2116.6,1420.3,2121.4,1469.4,2123.8,1469.4C2126.3,1469.4,2131.1,1431.2,2133.5,1420.3C2136.0,1409.4,2140.8,1386.6,2143.2,1382.1C2145.6,1377.5,2150.5,1373.0,2152.9,1373.0C2155.3,1373.0,2160.2,1464.0,2162.6,1473.1C2165.0,1482.2,2169.8,1491.3,2172.3,1491.3C2174.7,1491.3,2179.5,1391.9,2182.0,1391.9C2184.4,1391.9,2189.2,1415.3,2191.6,1425.8C2194.1,1436.3,2198.9,1476.0,2201.3,1476.0C2203.7,1476.0,2208.6,1343.9,2211.0,1343.9C2213.4,1343.9,2218.3,1346.8,2220.7,1349.3C2223.1,1351.8,2228.0,1356.6,2230.4,1363.9C2232.8,1371.2,2237.6,1471.6,2240.1,1473.1C2242.5,1474.5,2247.3,1476.0,2249.8,1476.0C2252.2,1476.0,2257.0,1400.3,2259.4,1400.3C2261.9,1400.3,2266.7,1493.1,2269.1,1493.1C2271.5,1493.1,2276.4,1488.5,2278.8,1484.0C2281.2,1479.4,2286.1,1412.3,2288.5,1412.3C2290.9,1412.3,2295.8,1414.1,2298.2,1415.9C2300.6,1417.8,2305.4,1475.8,2307.9,1476.7C2310.3,1477.6,2315.1,1477.6,2317.5,1478.5C2320.0,1479.4,2324.8,1493.8,2327.2,1493.8C2329.7,1493.8,2334.5,1492.5,2336.9,1491.3C2339.3,1490.0,2344.2,1474.9,2346.6,1474.9C2349.0,1474.9,2353.9,1484.0,2356.3,1484.0C2358.7,1484.0,2363.5,1479.3,2366.0,1479.3C2368.4,1479.3,2373.2,1484.0,2375.7,1484.0C2378.1,1484.0,2382.9,1432.3,2385.3,1432.3C2387.8,1432.3,2392.6,1493.8,2395.0,1493.8C2397.4,1493.8,2402.3,1380.3,2404.7,1380.3C2407.1,1380.3,2412.0,1399.6,2414.4,1411.2C2416.8,1422.8,2421.7,1462.7,2424.1,1473.1C2426.5,1483.4,2431.3,1493.8,2433.8,1493.8C2436.2,1493.8,2441.0,1422.9,2443.4,1422.9C2445.9,1422.9,2450.7,1493.1,2453.1,1493.1C2455.6,1493.1,2460.4,1488.5,2462.8,1484.0C2465.2,1479.4,2470.1,1437.5,2472.5,1418.5C2474.9,1399.5,2479.8,1331.9,2482.2,1331.9C2484.6,1331.9,2489.5,1474.2,2491.9,1474.2C2494.3,1474.2,2499.1,1414.8,2501.6,1402.1C2504.0,1389.5,2508.8,1373.0,2511.2,1373.0C2513.7,1373.0,2518.5,1390.2,2520.9,1403.9C2523.4,1417.7,2528.2,1482.9,2530.6,1482.9C2533.0,1482.9,2537.9,1480.7,2540.3,1478.5C2542.7,1476.3,2547.6,1394.8,2550.0,1394.8C2552.4,1394.8,2557.2,1476.0,2559.7,1476.0C2562.1,1476.0,2566.9,1414.8,2569.4,1414.8C2571.8,1414.8,2576.6,1474.2,2579.0,1475.6C2581.5,1477.1,2586.3,1478.5,2588.7,1478.5C2591.1,1478.5,2596.0,1423.4,2598.4,1409.4C2600.8,1395.4,2605.7,1366.4,2608.1,1366.4C2610.5,1366.4,2615.4,1477.6,2617.8,1482.2C2620.2,1486.7,2625.0,1491.3,2627.5,1491.3C2629.9,1491.3,2634.7,1490.4,2637.2,1489.4C2639.6,1488.5,2644.4,1362.8,2646.8,1362.8C2649.3,1362.8,2654.1,1480.2,2656.5,1481.1C2658.9,1482.0,2663.8,1482.9,2666.2,1482.9C2668.6,1482.9,2673.5,1435.6,2675.9,1435.6C2678.3,1435.6,2683.2,1487.6,2685.6,1487.6C2688.0,1487.6,2692.8,1454.6,2695.3,1434.9L2695.3,1493.8L1765.5,1493.8Z" fill="#e0d5e9"/><line x1="1765.5" y1="1307.5" x2="2695.3" y2="1307.5" stroke="#c3cbd6" stroke-width="1.5" opacity="0.8"/><line x1="1765.5" y1="1121.0" x2="2695.3" y2="1121.0" stroke="#6fb39c" stroke-width="3.6"/><path d="M1765.5,1184.5C1767.9,1186.5,1772.8,1190.0,1775.2,1190.0C1777.6,1190.0,1782.4,1173.6,1784.9,1173.6C1787.3,1173.6,1792.1,1250.4,1794.6,1250.4C1797.0,1250.4,1801.8,1211.8,1804.2,1211.8C1806.7,1211.8,1811.5,1213.6,1813.9,1213.6C1816.3,1213.6,1821.2,1207.2,1823.6,1200.9C1826.0,1194.5,1830.9,1152.8,1833.3,1152.8C1835.7,1152.8,1840.6,1165.6,1843.0,1178.3C1845.4,1191.0,1850.2,1412.3,1852.7,1412.3C1855.1,1412.3,1859.9,1152.8,1862.3,1152.8C1864.8,1152.8,1869.6,1203.1,1872.0,1203.1C1874.5,1203.1,1879.3,1145.6,1881.7,1145.6C1884.1,1145.6,1889.0,1265.6,1891.4,1265.6C1893.8,1265.6,1898.7,1154.7,1901.1,1154.7C1903.5,1154.7,1908.4,1156.5,1910.8,1158.3C1913.2,1160.1,1918.0,1178.3,1920.5,1198.3C1922.9,1218.3,1927.7,1436.7,1930.1,1436.7C1932.6,1436.7,1937.4,1190.0,1939.8,1190.0C1942.3,1190.0,1947.1,1214.9,1949.5,1217.2C1951.9,1219.6,1956.8,1222.0,1959.2,1222.0C1961.6,1222.0,1966.5,1178.3,1968.9,1178.3C1971.3,1178.3,1976.1,1188.9,1978.6,1199.4C1981.0,1210.0,1985.8,1382.8,1988.3,1382.8C1990.7,1382.8,1995.5,1232.2,1997.9,1211.8C2000.4,1191.4,2005.2,1175.6,2007.6,1171.0C2010.0,1166.5,2014.9,1161.9,2017.3,1161.9C2019.7,1161.9,2024.6,1180.1,2027.0,1180.1C2029.4,1180.1,2034.3,1171.0,2036.7,1171.0C2039.1,1171.0,2043.9,1193.8,2046.4,1216.5C2048.8,1239.3,2053.6,1421.0,2056.1,1421.0C2058.5,1421.0,2063.3,1172.9,2065.7,1172.9C2068.2,1172.9,2073.0,1192.1,2075.4,1196.5C2077.8,1200.9,2082.7,1204.7,2085.1,1208.2C2087.5,1211.6,2092.4,1223.8,2094.8,1223.8C2097.2,1223.8,2102.1,1148.5,2104.5,1148.5C2106.9,1148.5,2111.7,1182.0,2114.2,1182.0C2116.6,1182.0,2121.4,1149.2,2123.8,1149.2C2126.3,1149.2,2131.1,1177.3,2133.5,1185.6C2136.0,1193.9,2140.8,1215.8,2143.2,1215.8C2145.6,1215.8,2150.5,1214.3,2152.9,1212.9C2155.3,1211.4,2160.2,1142.6,2162.6,1142.6C2165.0,1142.6,2169.8,1375.9,2172.3,1375.9C2174.7,1375.9,2179.5,1189.4,2182.0,1188.5C2184.4,1187.6,2189.2,1187.6,2191.6,1186.7C2194.1,1185.8,2198.9,1149.9,2201.3,1149.9C2203.7,1149.9,2208.6,1204.9,2211.0,1204.9C2213.4,1204.9,2218.3,1202.7,2220.7,1202.7C2223.1,1202.7,2228.0,1205.6,2230.4,1205.6C2232.8,1205.6,2237.6,1149.9,2240.1,1149.9C2242.5,1149.9,2247.3,1155.0,2249.8,1160.1C2252.2,1165.2,2257.0,1175.6,2259.4,1191.0C2261.9,1206.5,2266.7,1434.9,2269.1,1434.9C2271.5,1434.9,2276.4,1141.2,2278.8,1141.2C2281.2,1141.2,2286.1,1187.4,2288.5,1187.4C2290.9,1187.4,2295.8,1180.8,2298.2,1174.7C2300.6,1168.5,2305.4,1138.3,2307.9,1138.3C2310.3,1138.3,2315.1,1141.9,2317.5,1145.6C2320.0,1149.2,2324.8,1357.9,2327.2,1385.7C2329.7,1413.6,2334.5,1441.4,2336.9,1441.4C2339.3,1441.4,2344.2,1200.1,2346.6,1185.6C2349.0,1171.0,2353.9,1159.8,2356.3,1156.5C2358.7,1153.2,2363.5,1152.0,2366.0,1149.9C2368.4,1147.9,2373.2,1140.1,2375.7,1140.1C2378.1,1140.1,2382.9,1166.5,2385.3,1192.9C2387.8,1219.3,2392.6,1363.9,2395.0,1363.9C2397.4,1363.9,2402.3,1273.8,2404.7,1258.4C2407.1,1242.9,2412.0,1241.4,2414.4,1227.4C2416.8,1213.4,2421.7,1146.3,2424.1,1146.3C2426.5,1146.3,2431.3,1395.9,2433.8,1395.9C2436.2,1395.9,2441.0,1226.3,2443.4,1226.3C2445.9,1226.3,2450.7,1437.8,2453.1,1437.8C2455.6,1437.8,2460.4,1150.3,2462.8,1150.3C2465.2,1150.3,2470.1,1184.6,2472.5,1194.7C2474.9,1204.8,2479.8,1231.1,2482.2,1231.1C2484.6,1231.1,2489.5,1137.2,2491.9,1137.2C2494.3,1137.2,2499.1,1187.3,2501.6,1198.3C2504.0,1209.4,2508.8,1225.6,2511.2,1225.6C2513.7,1225.6,2518.5,1217.4,2520.9,1209.2C2523.4,1201.1,2528.2,1138.3,2530.6,1138.3C2533.0,1138.3,2537.9,1142.8,2540.3,1147.4C2542.7,1151.9,2547.6,1231.8,2550.0,1231.8C2552.4,1231.8,2557.2,1136.5,2559.7,1136.5C2562.1,1136.5,2566.9,1179.0,2569.4,1179.0C2571.8,1179.0,2576.6,1141.2,2579.0,1141.2C2581.5,1141.2,2586.3,1141.2,2588.7,1141.2C2591.1,1141.2,2596.0,1196.5,2598.4,1202.0C2600.8,1207.4,2605.7,1212.9,2608.1,1212.9C2610.5,1212.9,2615.4,1142.6,2617.8,1142.6C2620.2,1142.6,2625.0,1436.7,2627.5,1436.7C2629.9,1436.7,2634.7,1135.4,2637.2,1135.4C2639.6,1135.4,2644.4,1206.7,2646.8,1206.7C2649.3,1206.7,2654.1,1179.8,2656.5,1171.0C2658.9,1162.3,2663.8,1136.5,2666.2,1136.5C2668.6,1136.5,2673.5,1182.7,2675.9,1182.7C2678.3,1182.7,2683.2,1138.3,2685.6,1138.3C2688.0,1138.3,2692.8,1159.2,2695.3,1171.8" fill="none" stroke="#6a93ba" stroke-width="3.6" stroke-linejoin="round" stroke-linecap="round"/><path d="M1765.5,1409.4C1767.9,1435.7,1772.8,1479.6,1775.2,1479.6C1777.6,1479.6,1782.4,1445.0,1784.9,1429.4C1787.3,1413.8,1792.1,1354.8,1794.6,1354.8C1797.0,1354.8,1801.8,1368.6,1804.2,1368.6C1806.7,1368.6,1811.5,1368.6,1813.9,1368.6C1816.3,1368.6,1821.2,1376.3,1823.6,1383.9C1826.0,1391.6,1830.9,1483.3,1833.3,1483.3C1835.7,1483.3,1840.6,1474.2,1843.0,1474.2C1845.4,1474.2,1850.2,1490.5,1852.7,1490.5C1855.1,1490.5,1859.9,1479.6,1862.3,1479.6C1864.8,1479.6,1869.6,1479.6,1872.0,1479.6C1874.5,1479.6,1879.3,1482.2,1881.7,1482.2C1884.1,1482.2,1889.0,1385.0,1891.4,1385.0C1893.8,1385.0,1898.7,1479.6,1901.1,1479.6C1903.5,1479.6,1908.4,1478.2,1910.8,1476.7C1913.2,1475.3,1918.0,1414.8,1920.5,1414.8C1922.9,1414.8,1927.7,1493.8,1930.1,1493.8C1932.6,1493.8,1937.4,1405.7,1939.8,1393.0C1942.3,1380.3,1947.1,1372.5,1949.5,1367.5C1951.9,1362.6,1956.8,1353.7,1959.2,1353.7C1961.6,1353.7,1966.5,1476.0,1968.9,1476.0C1971.3,1476.0,1976.1,1382.8,1978.6,1382.8C1981.0,1382.8,1985.8,1493.8,1988.3,1493.8C1990.7,1493.8,1995.5,1385.0,1997.9,1385.0C2000.4,1385.0,2005.2,1485.8,2007.6,1485.8C2010.0,1485.8,2014.9,1482.2,2017.3,1482.2C2019.7,1482.2,2024.6,1486.5,2027.0,1486.5C2029.4,1486.5,2034.3,1448.3,2036.7,1434.9C2039.1,1421.4,2043.9,1379.2,2046.4,1379.2C2048.8,1379.2,2053.6,1493.8,2056.1,1493.8C2058.5,1493.8,2063.3,1484.4,2065.7,1474.9C2068.2,1465.4,2073.0,1424.5,2075.4,1411.2C2077.8,1397.9,2082.7,1368.3,2085.1,1368.3C2087.5,1368.3,2092.4,1372.5,2094.8,1376.6C2097.2,1380.8,2102.1,1471.3,2104.5,1471.3C2106.9,1471.3,2111.7,1420.3,2114.2,1420.3C2116.6,1420.3,2121.4,1469.4,2123.8,1469.4C2126.3,1469.4,2131.1,1431.2,2133.5,1420.3C2136.0,1409.4,2140.8,1386.6,2143.2,1382.1C2145.6,1377.5,2150.5,1373.0,2152.9,1373.0C2155.3,1373.0,2160.2,1464.0,2162.6,1473.1C2165.0,1482.2,2169.8,1491.3,2172.3,1491.3C2174.7,1491.3,2179.5,1391.9,2182.0,1391.9C2184.4,1391.9,2189.2,1415.3,2191.6,1425.8C2194.1,1436.3,2198.9,1476.0,2201.3,1476.0C2203.7,1476.0,2208.6,1343.9,2211.0,1343.9C2213.4,1343.9,2218.3,1346.8,2220.7,1349.3C2223.1,1351.8,2228.0,1356.6,2230.4,1363.9C2232.8,1371.2,2237.6,1471.6,2240.1,1473.1C2242.5,1474.5,2247.3,1476.0,2249.8,1476.0C2252.2,1476.0,2257.0,1400.3,2259.4,1400.3C2261.9,1400.3,2266.7,1493.1,2269.1,1493.1C2271.5,1493.1,2276.4,1488.5,2278.8,1484.0C2281.2,1479.4,2286.1,1412.3,2288.5,1412.3C2290.9,1412.3,2295.8,1414.1,2298.2,1415.9C2300.6,1417.8,2305.4,1475.8,2307.9,1476.7C2310.3,1477.6,2315.1,1477.6,2317.5,1478.5C2320.0,1479.4,2324.8,1493.8,2327.2,1493.8C2329.7,1493.8,2334.5,1492.5,2336.9,1491.3C2339.3,1490.0,2344.2,1474.9,2346.6,1474.9C2349.0,1474.9,2353.9,1484.0,2356.3,1484.0C2358.7,1484.0,2363.5,1479.3,2366.0,1479.3C2368.4,1479.3,2373.2,1484.0,2375.7,1484.0C2378.1,1484.0,2382.9,1432.3,2385.3,1432.3C2387.8,1432.3,2392.6,1493.8,2395.0,1493.8C2397.4,1493.8,2402.3,1380.3,2404.7,1380.3C2407.1,1380.3,2412.0,1399.6,2414.4,1411.2C2416.8,1422.8,2421.7,1462.7,2424.1,1473.1C2426.5,1483.4,2431.3,1493.8,2433.8,1493.8C2436.2,1493.8,2441.0,1422.9,2443.4,1422.9C2445.9,1422.9,2450.7,1493.1,2453.1,1493.1C2455.6,1493.1,2460.4,1488.5,2462.8,1484.0C2465.2,1479.4,2470.1,1437.5,2472.5,1418.5C2474.9,1399.5,2479.8,1331.9,2482.2,1331.9C2484.6,1331.9,2489.5,1474.2,2491.9,1474.2C2494.3,1474.2,2499.1,1414.8,2501.6,1402.1C2504.0,1389.5,2508.8,1373.0,2511.2,1373.0C2513.7,1373.0,2518.5,1390.2,2520.9,1403.9C2523.4,1417.7,2528.2,1482.9,2530.6,1482.9C2533.0,1482.9,2537.9,1480.7,2540.3,1478.5C2542.7,1476.3,2547.6,1394.8,2550.0,1394.8C2552.4,1394.8,2557.2,1476.0,2559.7,1476.0C2562.1,1476.0,2566.9,1414.8,2569.4,1414.8C2571.8,1414.8,2576.6,1474.2,2579.0,1475.6C2581.5,1477.1,2586.3,1478.5,2588.7,1478.5C2591.1,1478.5,2596.0,1423.4,2598.4,1409.4C2600.8,1395.4,2605.7,1366.4,2608.1,1366.4C2610.5,1366.4,2615.4,1477.6,2617.8,1482.2C2620.2,1486.7,2625.0,1491.3,2627.5,1491.3C2629.9,1491.3,2634.7,1490.4,2637.2,1489.4C2639.6,1488.5,2644.4,1362.8,2646.8,1362.8C2649.3,1362.8,2654.1,1480.2,2656.5,1481.1C2658.9,1482.0,2663.8,1482.9,2666.2,1482.9C2668.6,1482.9,2673.5,1435.6,2675.9,1435.6C2678.3,1435.6,2683.2,1487.6,2685.6,1487.6C2688.0,1487.6,2692.8,1454.6,2695.3,1434.9" fill="none" stroke="#c7627f" stroke-width="3.6" stroke-linejoin="round" stroke-linecap="round"/><line x1="1765.5" y1="1492.8" x2="2695.3" y2="1492.8" stroke="#c48fb0" stroke-width="3.6"/><line x1="2346.0" y1="1120.0" x2="2346.0" y2="1493.8" stroke="#357e73" stroke-width="2"/><circle cx="2346.0" cy="1105.0" r="7" fill="#357e73"/></svg>
<div class="dot" style="left:588.1px;top:935.4px;background:#6a93c0"></div>
<div class="t lg" style="left:618.5px;top:933.6px;font-size:21.6px;letter-spacing:-0.14px;">Avg.</div>
<div class="t lv" style="left:667.9px;top:933.6px;font-size:21.6px;letter-spacing:0.74px;">232 ms</div>
<div class="dot" style="left:771.7px;top:935.4px;background:#d4be5e"></div>
<div class="t lg" style="left:801.0px;top:933.6px;font-size:21.6px;letter-spacing:0.85px;">95th percentile</div>
<div class="dot" style="left:984.1px;top:935.4px;background:#d28d4e"></div>
<div class="t lg" style="left:1012.0px;top:933.6px;font-size:21.6px;letter-spacing:0.95px;">99th percentile</div>
<svg class="abs" style="left:1199.0px;top:935.1px" width="20" height="30" viewBox="0 0 20 30"><circle cx="10" cy="9" r="8.2" fill="#357e73"/><path d="M10 9V27" stroke="#357e73" stroke-width="2"/></svg>
<div class="t lg" style="left:1230.6px;top:933.6px;font-size:21.6px;letter-spacing:0.61px;">Service version</div>
<div class="dot" style="left:1765.9px;top:935.4px;background:#437c45"></div>
<div class="t lg" style="left:1794.3px;top:933.6px;font-size:21.6px;letter-spacing:0.57px;">HTTP 2xx</div>
<div class="t lv" style="left:1900.7px;top:933.6px;font-size:21.6px;letter-spacing:0.84px;">2.0 rpm</div>
<div class="dot" style="left:2006.8px;top:935.4px;background:#e8a838"></div>
<div class="t lg" style="left:2035.6px;top:933.6px;font-size:21.6px;letter-spacing:0.62px;">HTTP 4xx</div>
<div class="t lv" style="left:2142.7px;top:933.6px;font-size:21.6px;letter-spacing:1.01px;">0.3 rpm</div>
<div class="dot" style="left:2249.8px;top:935.4px;background:#b5452f"></div>
<div class="t lg" style="left:2278.6px;top:933.6px;font-size:21.6px;letter-spacing:0.57px;">HTTP 5xx</div>
<div class="t lv" style="left:2384.8px;top:933.6px;font-size:21.6px;letter-spacing:1.14px;">0.4 rpm</div>
<svg class="abs" style="left:2496.0px;top:935.1px" width="20" height="30" viewBox="0 0 20 30"><circle cx="10" cy="9" r="8.2" fill="#357e73"/><path d="M10 9V27" stroke="#357e73" stroke-width="2"/></svg>
<div class="t lg" style="left:2528.0px;top:933.6px;font-size:21.6px;letter-spacing:0.65px;">Service version</div>
<div class="dot" style="left:587.8px;top:1585.4px;background:#d28d4e"></div>
<div class="t lg" style="left:618.0px;top:1583.6px;font-size:21.6px;letter-spacing:0.06px;">Avg.</div>
<div class="t lv" style="left:666.4px;top:1583.6px;font-size:21.6px;letter-spacing:-1.41px;">15%</div>
<svg class="abs" style="left:739.8px;top:1585.1px" width="20" height="30" viewBox="0 0 20 30"><circle cx="10" cy="9" r="8.2" fill="#357e73"/><path d="M10 9V27" stroke="#357e73" stroke-width="2"/></svg>
<div class="t lg" style="left:772.0px;top:1583.6px;font-size:21.6px;letter-spacing:0.60px;">Service version</div>
<div class="dot" style="left:1766.1px;top:1567.5px;background:#6dae98"></div>
<div class="t lg" style="left:1795.0px;top:1565.7px;font-size:21.6px;letter-spacing:1.03px;">app</div>
<div class="t lv" style="left:1841.0px;top:1565.7px;font-size:21.6px;letter-spacing:0.29px;">49%</div>
<div class="dot" style="left:1914.4px;top:1567.5px;background:#6a93c0"></div>
<div class="t lg" style="left:1942.5px;top:1565.7px;font-size:21.6px;letter-spacing:2.10px;">http</div>
<div class="t lv" style="left:1992.6px;top:1565.7px;font-size:21.6px;letter-spacing:0.09px;">48%</div>
<div class="dot" style="left:2064.6px;top:1567.5px;background:#c6647f"></div>
<div class="t lg" style="left:2092.9px;top:1565.7px;font-size:21.6px;letter-spacing:0.54px;">InternalResource</div>
<div class="t lv" style="left:2271.7px;top:1565.7px;font-size:21.6px;letter-spacing:-0.21px;">0.0%</div>
<div class="dot" style="left:2350.4px;top:1567.5px;background:#8e6dbb"></div>
<div class="t lg" style="left:2378.6px;top:1565.7px;font-size:21.6px;letter-spacing:0.99px;">postgresql</div>
<div class="t lv" style="left:2494.1px;top:1565.7px;font-size:21.6px;letter-spacing:-2.34px;">3.1%</div>
<div class="dot" style="left:1766.1px;top:1605.7px;background:#c693b1"></div>
<div class="t lg" style="left:1794.5px;top:1603.9px;font-size:21.6px;letter-spacing:0.89px;">request-dispatcher</div>
<div class="t lv" style="left:1996.1px;top:1603.9px;font-size:21.6px;letter-spacing:-0.21px;">0.0%</div>
<div class="dot" style="left:2074.1px;top:1605.7px;background:#d4be5e"></div>
<div class="t lg" style="left:2102.6px;top:1603.9px;font-size:21.6px;letter-spacing:1.07px;">unknown</div>
<div class="t lv" style="left:2201.9px;top:1603.9px;font-size:21.6px;letter-spacing:-1.81px;">0.1%</div>
<svg class="abs" style="left:2277.6px;top:1605.4px" width="20" height="30" viewBox="0 0 20 30"><circle cx="10" cy="9" r="8.2" fill="#357e73"/><path d="M10 9V27" stroke="#357e73" stroke-width="2"/></svg>
<div class="t lg" style="left:2310.3px;top:1603.9px;font-size:21.6px;letter-spacing:0.63px;">Service version</div>
<div class="abs" style="left:37px;top:906px;width:493px;height:363px;background:#fff;border:2px solid #dce1ea;border-radius:9px;box-shadow:0 21px 43px rgba(65,78,101,.1),0 11px 21px rgba(65,78,101,.1),0 7px 7px rgba(65,78,101,.1),0 3.6px 3.6px rgba(65,78,101,.1)"></div>
<svg class="abs" style="left:180px;top:886px" width="48" height="24" viewBox="0 0 48 24"><path d="M2 22L24 2L46 22" fill="#fff" stroke="#d9dee8" stroke-width="1.6" stroke-linejoin="round"/><rect x="3" y="20" width="42" height="4" fill="#fff"/></svg>
<h3 class="t b" style="left:51.4px;top:934.2px;font-size:21.6px;letter-spacing:-0.59px;">APPLY KUBERNETES POD FILTER</h3>
<div class="hr" style="left:52px;top:965px;width:460px"></div>
<div class="field" style="left:52px;top:982px;width:460px;height:71px"></div>
<svg class="abs" style="left:70.8px;top:1000.4px" width="35.2" height="33.1" viewBox="0 0 34 32" fill="none" stroke="#343741" stroke-width="2" stroke-linecap="round"><path d="M14.5 24.5A10.8 10.8 0 1 1 24.5 19"/><path d="M23 20.5L30 27.5"/></svg>
<div class="t " style="left:123.3px;top:1004.7px;font-size:25.2px;letter-spacing:0.84px;color:#69707d">Filter options</div>
<div class="t " style="left:123.5px;top:1081.7px;font-size:25.2px;letter-spacing:1.09px;color:#343741">opbeans-java-5bdcd94...</div>
<div class="badge" style="left:454px;top:1080px;width:38px;height:31px"></div>
<div class="t " style="left:461.0px;top:1084.4px;font-size:19.8px;letter-spacing:0.70px;color:#343741">12</div>
<div class="abs" style="left:52px;top:1124px;width:460px;height:58px;background:linear-gradient(#e9eff7 0,#e9eff7 75%,rgba(233,239,247,0) 100%)"></div>
<div class="t blue u2" style="left:123.5px;top:1139.7px;font-size:25.2px;letter-spacing:0.99px;"><span class="ul">opbeans-java-8579ccd</span>...</div>
<div class="badge" style="left:454px;top:1138px;width:38px;height:31px"></div>
<div class="t " style="left:461.0px;top:1142.4px;font-size:19.8px;letter-spacing:0.70px;color:#2b69b0">12</div>
<div class="abs" style="left:280px;top:1198px;width:232px;height:56px;background:#2d6cb3;border-radius:7px;box-shadow:0 3px 4px -1px rgba(45,108,179,.35)"></div>
<div class="t " style="left:304.5px;top:1211.6px;font-size:28.8px;letter-spacing:0.94px;color:#fff;-webkit-text-stroke:0.4px #fff">Apply options</div>
</body></html>
